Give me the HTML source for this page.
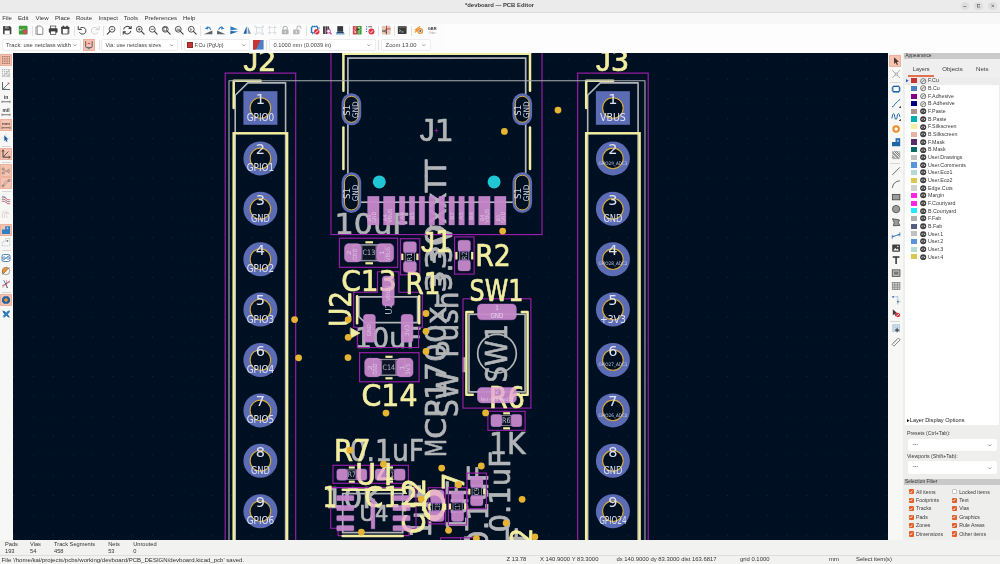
<!DOCTYPE html>
<html lang="en"><head><meta charset="utf-8"><title>*devboard — PCB Editor</title>
<style>

html,body{margin:0;padding:0;background:#fff}
#app{transform:translateZ(0);will-change:transform;position:relative;width:1000px;height:564px;overflow:hidden;background:#f6f6f5;
 font-family:"Liberation Sans","DejaVu Sans",sans-serif;font-size:5.8px;color:#3b3b3b;line-height:1}
#app div,#app span{position:absolute;white-space:nowrap;box-sizing:border-box}
.title{left:0;top:0;width:1000px;height:12.5px;background:#ebebeb;border-bottom:0.6px solid #dadada}
.title .t{left:399.5px;width:200px;top:2.8px;text-align:center;font-weight:bold;font-size:5.9px;color:#3a3a3a}
.wb{top:2px;width:8.4px;height:8.4px;border-radius:50%;background:#dedede}
.menubar{left:0;top:12.5px;width:1000px;height:11.1px;background:#f7f7f7}
.menubar span{top:2.7px;font-size:6.05px;color:#333}
.tbwhite{left:446px;top:23.6px;width:554px;height:29.2px;background:#fdfdfd}
.tb{left:0;top:23.6px;width:446px;height:29.2px;background:#fcfcfc}
.sep{width:0.7px;background:#e2e2e2}
.dd{top:38.9px;height:11.8px;background:#fff;border:0.6px solid #ececec;border-radius:2.2px}
.dd .x{top:2.9px;font-size:5.8px;color:#444}
.hl{background:#f4c3b1;border:0.5px solid #edb09a;border-radius:0.8px}
.lt{left:0;top:52.7px;width:12.6px;height:487.1px;background:#f7f7f6}
.rt{left:888.3px;top:52.7px;width:14.9px;height:487.1px;background:#f7f7f6}
.ap{left:903.2px;top:52.7px;width:96.8px;height:487.1px;background:#eeeeed}
.ap .hd{left:0.6px;top:0;width:96.2px;height:6.2px;background:#c9c9c9;font-size:4.9px;color:#333}
.ap .tabs{left:0.8px;top:6.1px;width:96px;height:17.8px;background:#efefef}
.ap .tabs span{top:7.6px;font-size:6.1px;color:#3c3c3c}
.ap .list{left:1.8px;top:24px;width:93.8px;height:348.2px;background:#fff}
.row{left:0;width:93.8px;height:7.66px}
.row .sw{left:5.9px;top:1.3px;width:6.3px;height:5.1px}
.row .nm{left:23px;top:1.5px;font-size:5.3px;color:#3a3a3a}
.cb{width:5.2px;height:5.2px;border-radius:1px;background:#e25f2c}
.cb0{width:5.2px;height:5.2px;border-radius:1px;background:#fff;border:0.6px solid #c4c4c4}
.lbl{font-size:5.2px;color:#3a3a3a}
.bot{left:0;top:539.8px;width:1000px;height:24.2px;background:#f2f2f1}
.bot span{font-size:5.7px;color:#333}
.bot span.st{font-size:5.9px}

</style></head>
<body>
<div id="app">
<div class="title"><div class="t">*devboard — PCB Editor</div>
<div class="wb" style="left:960.8px">
<svg style="position:absolute;left:2.4px;top:2.4px" width="3.6" height="3.6" viewBox="0 0 10 10"><line x1="1" y1="7" x2="9" y2="7" stroke="#444" stroke-width="1.6"/></svg>
</div>
<div class="wb" style="left:974.3px">
<svg style="position:absolute;left:2.4px;top:2.4px" width="3.6" height="3.6" viewBox="0 0 10 10"><rect x="1.5" y="1.5" width="7" height="7" fill="none" stroke="#444" stroke-width="1.5"/></svg>
</div>
<div class="wb" style="left:988.3px">
<svg style="position:absolute;left:2.4px;top:2.4px" width="3.6" height="3.6" viewBox="0 0 10 10"><path d="M1.2 1.2L8.8 8.8M8.8 1.2L1.2 8.8" stroke="#444" stroke-width="1.6"/></svg>
</div>
</div>
<div class="menubar">
<span style="left:2.2px">File</span>
<span style="left:18.0px">Edit</span>
<span style="left:35.5px">View</span>
<span style="left:55.0px">Place</span>
<span style="left:75.9px">Route</span>
<span style="left:98.5px">Inspect</span>
<span style="left:123.8px">Tools</span>
<span style="left:144.5px">Preferences</span>
<span style="left:183.0px">Help</span>
</div>
<div class="tbwhite"></div><div class="tb"></div>
<div class="sep" style="left:31.5px;top:25.6px;height:10.4px"></div>
<div class="sep" style="left:73.5px;top:25.6px;height:10.4px"></div>
<div class="sep" style="left:103.2px;top:25.6px;height:10.4px"></div>
<div class="sep" style="left:119.5px;top:25.6px;height:10.4px"></div>
<div class="sep" style="left:200.0px;top:25.6px;height:10.4px"></div>
<div class="sep" style="left:306.2px;top:25.6px;height:10.4px"></div>
<div class="sep" style="left:348.6px;top:25.6px;height:10.4px"></div>
<div class="sep" style="left:378.2px;top:25.6px;height:10.4px"></div>
<div class="sep" style="left:394.2px;top:25.6px;height:10.4px"></div>
<div class="sep" style="left:411.2px;top:25.6px;height:10.4px"></div>
<div class="sep" style="left:99.4px;top:39.6px;height:10.6px"></div>
<div class="sep" style="left:181.0px;top:39.6px;height:10.6px"></div>
<div class="sep" style="left:266.2px;top:39.6px;height:10.6px"></div>
<div class="sep" style="left:378.4px;top:39.6px;height:10.6px"></div>
<svg style="position:absolute;left:1.8px;top:25.4px" width="10.4" height="10.4" viewBox="0 0 20 20"><path d="M2 3.2Q2 2 3.2 2H15l3 3v11.8q0 1.2-1.2 1.2H3.2Q2 18 2 16.8Z" fill="#3f3f3f"/><rect x="5" y="10.6" width="10" height="7.4" fill="#fff"/><rect x="5.6" y="2" width="7.8" height="5" fill="#9a9a9a"/><rect x="10.6" y="2.8" width="1.9" height="3.4" fill="#3f3f3f"/></svg>
<svg style="position:absolute;left:18.2px;top:25.4px" width="10.4" height="10.4" viewBox="0 0 20 20"><rect x="1.6" y="1.6" width="16.8" height="16.8" rx="2" fill="#3f9b35"/><path d="M3 9.5h5l2-2h3" fill="none" stroke="#d7f0c8" stroke-width="1.1"/><circle cx="4" cy="9.5" r="1.2" fill="#fff"/><circle cx="13.6" cy="13.2" r="3.5" fill="#dc4163"/><circle cx="13.6" cy="13.2" r="1.4" fill="#f5c6cf"/><rect x="12.9" y="8.4" width="1.4" height="9.6" fill="#dc4163"/><rect x="8.8" y="12.5" width="9.6" height="1.4" fill="#dc4163"/><path d="M10.2 9.8l6.8 6.8M17 9.8l-6.8 6.8" stroke="#dc4163" stroke-width="1.3"/></svg>
<svg style="position:absolute;left:34.2px;top:25.4px" width="10.4" height="10.4" viewBox="0 0 20 20"><path d="M3 4h9v14H3Z" fill="#e4e4e4" stroke="#9a9a9a" stroke-width="1"/><path d="M6 2h7l4 4v12H6Z" fill="#fff" stroke="#5a5a5a" stroke-width="1.3"/></svg>
<svg style="position:absolute;left:47.5px;top:25.4px" width="10.4" height="10.4" viewBox="0 0 20 20"><rect x="5" y="2" width="10" height="6" fill="#fff" stroke="#3f3f3f" stroke-width="1.4"/><rect x="1.6" y="6.4" width="16.8" height="8.6" rx="2" fill="#3f3f3f"/><rect x="5" y="11.6" width="10" height="6.4" fill="#fff" stroke="#3f3f3f" stroke-width="1.4"/></svg>
<svg style="position:absolute;left:60.1px;top:25.4px" width="10.4" height="10.4" viewBox="0 0 20 20"><rect x="2" y="3.4" width="16" height="5" rx="1" fill="#3f3f3f"/><rect x="4.6" y="7" width="10.8" height="10.4" fill="#fff" stroke="#3f3f3f" stroke-width="1.5"/><path d="M3 8v9M17 8v9" stroke="#3f3f3f" stroke-width="1.6"/><rect x="5" y="1.4" width="3" height="3" fill="#3f3f3f"/><rect x="12" y="1.4" width="3" height="3" fill="#3f3f3f"/></svg>
<svg style="position:absolute;left:76.5px;top:25.4px" width="10.4" height="10.4" viewBox="0 0 20 20"><path d="M5.2 7.2A6.6 6.6 0 1 1 5 14.6" fill="none" stroke="#3f3f3f" stroke-width="1.9" stroke-linecap="round"/><path d="M2.4 2.8v6h6" fill="none" stroke="#3f3f3f" stroke-width="1.9" stroke-linejoin="round" stroke-linecap="round"/></svg>
<svg style="position:absolute;left:90.3px;top:25.4px" width="10.4" height="10.4" viewBox="0 0 20 20"><path d="M14.8 7.2A6.6 6.6 0 1 0 15 14.6" fill="none" stroke="#cdcdcd" stroke-width="1.9" stroke-linecap="round"/><path d="M17.6 2.8v6h-6" fill="none" stroke="#cdcdcd" stroke-width="1.9" stroke-linejoin="round" stroke-linecap="round"/></svg>
<svg style="position:absolute;left:106.4px;top:25.4px" width="10.4" height="10.4" viewBox="0 0 20 20"><circle cx="11.6" cy="8.2" r="5.6" fill="#fff" stroke="#3f3f3f" stroke-width="1.7"/><line x1="7.6" y1="12.4" x2="2.4" y2="17.6" stroke="#3f3f3f" stroke-width="2.1" stroke-linecap="round"/><path d="M8.6 10q3-4.4 6 0M11.6 5.4v1.6" fill="none" stroke="#3f3f3f" stroke-width="1.2"/></svg>
<svg style="position:absolute;left:122.4px;top:25.4px" width="10.4" height="10.4" viewBox="0 0 20 20"><path d="M3 8.6A7.2 7.2 0 0 1 16.2 6" fill="none" stroke="#3f3f3f" stroke-width="2"/><path d="M17 11.4A7.2 7.2 0 0 1 3.8 14" fill="none" stroke="#3f3f3f" stroke-width="2"/><path d="M17.6 1.8v5h-5" fill="none" stroke="#3f3f3f" stroke-width="2"/><path d="M2.4 18.2v-5h5" fill="none" stroke="#3f3f3f" stroke-width="2"/></svg>
<svg style="position:absolute;left:135.4px;top:25.4px" width="10.4" height="10.4" viewBox="0 0 20 20"><circle cx="8.2" cy="8.2" r="5.6" fill="#fff" stroke="#3f3f3f" stroke-width="1.7"/><line x1="12.4" y1="12.4" x2="17.6" y2="17.6" stroke="#3f3f3f" stroke-width="2.1" stroke-linecap="round"/><path d="M5.2 8.2h6M8.2 5.2v6" stroke="#3f3f3f" stroke-width="1.5"/></svg>
<svg style="position:absolute;left:148.4px;top:25.4px" width="10.4" height="10.4" viewBox="0 0 20 20"><circle cx="8.2" cy="8.2" r="5.6" fill="#fff" stroke="#3f3f3f" stroke-width="1.7"/><line x1="12.4" y1="12.4" x2="17.6" y2="17.6" stroke="#3f3f3f" stroke-width="2.1" stroke-linecap="round"/><path d="M5.2 8.2h6" stroke="#3f3f3f" stroke-width="1.5"/></svg>
<svg style="position:absolute;left:161.4px;top:25.4px" width="10.4" height="10.4" viewBox="0 0 20 20"><circle cx="8.2" cy="8.2" r="5.6" fill="#fff" stroke="#3f3f3f" stroke-width="1.7"/><line x1="12.4" y1="12.4" x2="17.6" y2="17.6" stroke="#3f3f3f" stroke-width="2.1" stroke-linecap="round"/><rect x="5.6" y="5" width="5.2" height="6.4" fill="none" stroke="#3f3f3f" stroke-width="1.3"/></svg>
<svg style="position:absolute;left:174.4px;top:25.4px" width="10.4" height="10.4" viewBox="0 0 20 20"><circle cx="8.2" cy="8.2" r="5.6" fill="#fff" stroke="#3f3f3f" stroke-width="1.7"/><line x1="12.4" y1="12.4" x2="17.6" y2="17.6" stroke="#3f3f3f" stroke-width="2.1" stroke-linecap="round"/><path d="M5 10.6l2.2-4 2 2.4 1.4-1.4 1 3Z" fill="none" stroke="#3f3f3f" stroke-width="1.1"/></svg>
<svg style="position:absolute;left:187.0px;top:25.4px" width="10.4" height="10.4" viewBox="0 0 20 20"><circle cx="8.2" cy="8.2" r="5.6" fill="#fff" stroke="#3f3f3f" stroke-width="1.7"/><line x1="12.4" y1="12.4" x2="17.6" y2="17.6" stroke="#3f3f3f" stroke-width="2.1" stroke-linecap="round"/><path d="M6.6 5v6.4l1.8-1.6 1.8 1.2Z" fill="#3f3f3f"/></svg>
<svg style="position:absolute;left:202.8px;top:25.4px" width="10.4" height="10.4" viewBox="0 0 20 20"><path d="M1.6 17.8h16.4v-7.4Z" fill="#5d6268"/><path d="M14.6 9A5.2 5.2 0 0 0 7 4.6" fill="none" stroke="#2f7fc4" stroke-width="2.2"/><path d="M3.4 7.4l6.2-4.6.4 6Z" fill="#2f7fc4"/></svg>
<svg style="position:absolute;left:216.4px;top:25.4px" width="10.4" height="10.4" viewBox="0 0 20 20"><path d="M18.4 17.8H2v-7.4Z" fill="#5d6268"/><path d="M5.4 9A5.2 5.2 0 0 1 13 4.6" fill="none" stroke="#2f7fc4" stroke-width="2.2"/><path d="M16.6 7.4l-6.2-4.6-.4 6Z" fill="#2f7fc4"/></svg>
<svg style="position:absolute;left:229.2px;top:25.4px" width="10.4" height="10.4" viewBox="0 0 20 20"><path d="M2.6 2.6L17.6 8 2.6 10.4Z" fill="#2f7fc4"/><path d="M2.6 11.4L17.6 12.4 2.6 17.6Z" fill="#1f66a8"/></svg>
<svg style="position:absolute;left:241.8px;top:25.4px" width="10.4" height="10.4" viewBox="0 0 20 20"><path d="M9 2.4V17H2.6Z" fill="#1f64a6"/><path d="M11 2.4V17h6.4Z" fill="#7e97b0"/></svg>
<svg style="position:absolute;left:254.4px;top:25.4px" width="10.4" height="10.4" viewBox="0 0 20 20"><rect x="4.4" y="4.4" width="11.2" height="11.2" fill="#f6f8fa" stroke="#c3cedb" stroke-width="1.1"/><path d="M2 5V2h3M15 2h3v3M18 15v3h-3M5 18H2v-3" fill="none" stroke="#b4c3d6" stroke-width="1.2"/></svg>
<svg style="position:absolute;left:267.4px;top:25.4px" width="10.4" height="10.4" viewBox="0 0 20 20"><rect x="5" y="5" width="10" height="10" fill="none" stroke="#cfd6de" stroke-width="1.1"/><path d="M5 1.6v4M1.6 5h4M15 1.6v4M18.4 5h-4M5 18.4v-4M1.6 15h4M15 18.4v-4M18.4 15h-4" stroke="#c3ccd6" stroke-width="1.1"/></svg>
<svg style="position:absolute;left:280.4px;top:25.4px" width="10.4" height="10.4" viewBox="0 0 20 20"><path d="M6 9V6.4a4 4 0 0 1 8 0V9" fill="none" stroke="#b3b3b3" stroke-width="2"/><rect x="3.6" y="8.6" width="12.8" height="9.4" rx="1.2" fill="#b3b3b3"/><rect x="9" y="11.6" width="2" height="3.6" fill="#eee"/></svg>
<svg style="position:absolute;left:292.4px;top:25.4px" width="10.4" height="10.4" viewBox="0 0 20 20"><path d="M9.6 9V5.6a3.8 3.8 0 0 1 7.6 0V7" fill="none" stroke="#b9b9b9" stroke-width="2"/><rect x="2.2" y="8.6" width="12.4" height="9.4" rx="1.2" fill="#b9b9b9"/><rect x="7.4" y="11.6" width="2" height="3.6" fill="#eee"/></svg>
<svg style="position:absolute;left:309.8px;top:25.4px" width="10.4" height="10.4" viewBox="0 0 20 20"><rect x="3.2" y="3.4" width="11.6" height="11.6" rx="1.4" fill="none" stroke="#1f6fb6" stroke-width="2.2"/><path d="M5 1v3M9 1v3M13 1v3M1 6h3M1 10h3M1 14h3M5 15v3M16 6h3" stroke="#1f6fb6" stroke-width="1.7"/><circle cx="13" cy="13" r="5.2" fill="#d9343f"/><line x1="9.8" y1="15.6" x2="16.2" y2="10.4" stroke="#fff" stroke-width="1.7"/></svg>
<svg style="position:absolute;left:322.4px;top:25.4px" width="10.4" height="10.4" viewBox="0 0 20 20"><rect x="2" y="2.4" width="3.6" height="15" fill="#3f3f3f"/><rect x="6.6" y="2.4" width="3.6" height="15" fill="#3f3f3f"/><rect x="11" y="3" width="3.4" height="8" fill="#3f3f3f" transform="rotate(-12 12 8)"/><circle cx="12.6" cy="11.8" r="3.6" fill="#fff" stroke="#c7348f" stroke-width="1.7"/><line x1="15" y1="14.4" x2="18.2" y2="17.8" stroke="#c7348f" stroke-width="2.2"/></svg>
<svg style="position:absolute;left:335.4px;top:25.4px" width="10.4" height="10.4" viewBox="0 0 20 20"><path d="M4.4 2.2h11.2v10H4.4Z" fill="#33373c"/><path d="M1.8 16.6l3-4.6h10.4l3 4.6Z" fill="#27476a"/><rect x="1.8" y="16.4" width="16.4" height="1.8" fill="#5fa3d8"/></svg>
<svg style="position:absolute;left:351.8px;top:25.4px" width="10.4" height="10.4" viewBox="0 0 20 20"><rect x="1.6" y="1.8" width="8.4" height="16.4" rx="1" fill="#d94050"/><rect x="9.6" y="1.8" width="8.8" height="16.4" rx="1" fill="#3f9b35"/><path d="M6 3v6l-2.4 2.4M13.6 17v-6l2.4-2.4" fill="none" stroke="#f4f4f4" stroke-width="1.2"/><circle cx="6" cy="13.6" r="1.6" fill="#fff"/><circle cx="13.6" cy="5.4" r="1.6" fill="#fff"/><path d="M8 8.4h4.4M10.6 6.4l2 2-2 2" fill="none" stroke="#222" stroke-width="1.3"/></svg>
<svg style="position:absolute;left:364.8px;top:25.4px" width="10.4" height="10.4" viewBox="0 0 20 20"><path d="M1.8 3.4h2.4M1.8 8h2.4M1.8 12.6h2.4" stroke="#2f7fc4" stroke-width="2.2"/><path d="M6.4 3.4h7.2" stroke="#3f3f3f" stroke-width="1.5"/><circle cx="12.4" cy="12.4" r="5.8" fill="#d9343f"/><polyline points="9.4,12.6 11.6,14.8 15.4,10.2" fill="none" stroke="#fff" stroke-width="1.8"/></svg>
<svg style="position:absolute;left:380.8px;top:25.4px" width="10.4" height="10.4" viewBox="0 0 20 20"><rect x="1.6" y="1.6" width="16.8" height="16.8" rx="1.2" fill="#ddc9b4"/><path d="M10.6 1.6v16.8M10.6 7.4h7.8" stroke="#c5303c" stroke-width="1.7" fill="none"/><path d="M2 11.6h5l3.4-3.4M7 11.6l3.4 3.6" stroke="#2b2b2b" stroke-width="1.7" fill="none"/></svg>
<svg style="position:absolute;left:397.4px;top:25.4px" width="10.4" height="10.4" viewBox="0 0 20 20"><rect x="1.6" y="2.6" width="16.8" height="14.8" rx="1.4" fill="#3b3b3b"/><rect x="1.6" y="2.6" width="16.8" height="3.2" rx="1.2" fill="#5c5c5c"/><path d="M4.4 9l2.6 2-2.6 2M8.4 13.4h4" fill="none" stroke="#f2f2f2" stroke-width="1.3"/></svg>
<svg style="position:absolute;left:414.2px;top:25.4px" width="10.4" height="10.4" viewBox="0 0 20 20"><path d="M2 9.4L11 3.4M2.4 13.6L9 8.6M4.2 9.4h7" stroke="#f0902c" stroke-width="2.2" stroke-linecap="round"/><circle cx="12" cy="11.6" r="5.6" fill="#f0902c"/><circle cx="12" cy="11.6" r="3.1" fill="#fff"/><circle cx="12" cy="11.6" r="1.9" fill="#2d5f94"/></svg>
<svg style="position:absolute;left:427.2px;top:25.4px" width="10.4" height="10.4" viewBox="0 0 20 20"><text x="10" y="9.4" font-family="Liberation Sans,sans-serif" font-weight="bold" font-size="8.4" text-anchor="middle" fill="#3a3a3a" textLength="17" lengthAdjust="spacingAndGlyphs">GBR</text><text x="10" y="16.8" font-family="Liberation Sans,sans-serif" font-size="5.4" text-anchor="middle" fill="#9a9a9a" textLength="13" lengthAdjust="spacingAndGlyphs">Order</text></svg>
<div class="dd" style="left:1.5px;width:79.1px"><span class="x" style="left:3.5px;font-size:5.8px">Track: use netclass width</span></div>
<svg style="position:absolute;left:73.2px;top:44.0px" width="3.6" height="2.6" viewBox="0 0 10 6.5"><polyline points="0.8,0.8 5,5.2 9.2,0.8" fill="none" stroke="#555" stroke-width="1.5"/></svg>
<div class="dd" style="left:101.4px;width:76.8px"><span class="x" style="left:3.2px;font-size:5.5px">Via: use netclass sizes</span></div>
<svg style="position:absolute;left:169.79999999999998px;top:44.0px" width="3.6" height="2.6" viewBox="0 0 10 6.5"><polyline points="0.8,0.8 5,5.2 9.2,0.8" fill="none" stroke="#555" stroke-width="1.5"/></svg>
<div class="dd" style="left:183.6px;width:66.6px"><span class="x" style="left:9.8px;font-size:5.3px">F.Cu (PgUp)</span></div>
<svg style="position:absolute;left:242.0px;top:44.0px" width="3.6" height="2.6" viewBox="0 0 10 6.5"><polyline points="0.8,0.8 5,5.2 9.2,0.8" fill="none" stroke="#555" stroke-width="1.5"/></svg>
<div class="dd" style="left:268.6px;width:107.2px"><span class="x" style="left:3.8px;font-size:5.75px">0.1000 mm (0.0039 in)</span></div>
<svg style="position:absolute;left:367.2px;top:44.0px" width="3.6" height="2.6" viewBox="0 0 10 6.5"><polyline points="0.8,0.8 5,5.2 9.2,0.8" fill="none" stroke="#555" stroke-width="1.5"/></svg>
<div class="dd" style="left:380.6px;width:50.8px"><span class="x" style="left:4.0px;font-size:5.8px">Zoom 13.00</span></div>
<svg style="position:absolute;left:422.4px;top:44.0px" width="3.6" height="2.6" viewBox="0 0 10 6.5"><polyline points="0.8,0.8 5,5.2 9.2,0.8" fill="none" stroke="#555" stroke-width="1.5"/></svg>
<div style="left:187.2px;top:42.2px;width:5.6px;height:5.4px;background:#c83434;border:0.4px solid #8d2a2a"></div>
<div class="hl" style="left:83.2px;top:38.9px;width:12.2px;height:12.2px"></div>
<svg style="position:absolute;left:84.4px;top:40.0px" width="9.8" height="9.8" viewBox="0 0 20 20"><path d="M3.4 2.4v11.2q0 2 2 2h9.2q2 0 2-2V2.4" fill="none" stroke="#3f4750" stroke-width="1.7"/><path d="M7.4 7h5.2" stroke="#c5303c" stroke-width="1.7"/><path d="M7 15.8h6L10 19.6Z" fill="#2f7fc4"/></svg>
<svg style="position:absolute;left:253px;top:40px" width="10.6" height="9.6" viewBox="0 0 10.6 9.6"><rect width="10.6" height="9.6" fill="#4d7fc4"/><polygon points="0,0 7.6,0 3,9.6 0,9.6" fill="#c83434"/></svg>
<div class="lt">
<div class="hl" style="left:0.3px;top:1.4px;width:11.9px;height:12.2px"></div>
<div class="hl" style="left:0.3px;top:66.2px;width:11.9px;height:12.2px"></div>
<div class="hl" style="left:0.3px;top:95.2px;width:11.9px;height:12.2px"></div>
<div class="hl" style="left:0.3px;top:111.7px;width:11.9px;height:12.2px"></div>
<div class="hl" style="left:0.3px;top:124.6px;width:11.9px;height:12.2px"></div>
<div class="hl" style="left:0.3px;top:170.9px;width:11.9px;height:12.2px"></div>
<div class="hl" style="left:0.3px;top:241.6px;width:11.9px;height:12.2px"></div>
<div style="left:1.5px;top:93.1px;width:9.5px;height:0.7px;background:#d6d6d6"></div>
<div style="left:1.5px;top:109.5px;width:9.5px;height:0.7px;background:#d6d6d6"></div>
<div style="left:1.5px;top:138.7px;width:9.5px;height:0.7px;background:#d6d6d6"></div>
<div style="left:1.5px;top:197.1px;width:9.5px;height:0.7px;background:#d6d6d6"></div>
<div style="left:1.5px;top:239.3px;width:9.5px;height:0.7px;background:#d6d6d6"></div>
</div>
<svg style="position:absolute;left:1.3px;top:55.2px" width="10.0" height="10.0" viewBox="0 0 20 20"><rect x="2.2" y="2.2" width="2.4" height="2.4" fill="#8e5a4c"/><rect x="2.2" y="6.6" width="2.4" height="2.4" fill="#8e5a4c"/><rect x="2.2" y="11" width="2.4" height="2.4" fill="#8e5a4c"/><rect x="2.2" y="15.4" width="2.4" height="2.4" fill="#8e5a4c"/><rect x="6.6" y="2.2" width="2.4" height="2.4" fill="#8e5a4c"/><rect x="6.6" y="6.6" width="2.4" height="2.4" fill="#8e5a4c"/><rect x="6.6" y="11" width="2.4" height="2.4" fill="#8e5a4c"/><rect x="6.6" y="15.4" width="2.4" height="2.4" fill="#8e5a4c"/><rect x="11" y="2.2" width="2.4" height="2.4" fill="#8e5a4c"/><rect x="11" y="6.6" width="2.4" height="2.4" fill="#8e5a4c"/><rect x="11" y="11" width="2.4" height="2.4" fill="#8e5a4c"/><rect x="11" y="15.4" width="2.4" height="2.4" fill="#8e5a4c"/><rect x="15.4" y="2.2" width="2.4" height="2.4" fill="#8e5a4c"/><rect x="15.4" y="6.6" width="2.4" height="2.4" fill="#8e5a4c"/><rect x="15.4" y="11" width="2.4" height="2.4" fill="#8e5a4c"/><rect x="15.4" y="15.4" width="2.4" height="2.4" fill="#8e5a4c"/></svg>
<svg style="position:absolute;left:1.3px;top:68.2px" width="10.0" height="10.0" viewBox="0 0 20 20"><rect x="2.4" y="2.4" width="1.8" height="1.8" fill="#777"/><rect x="2.4" y="6.6" width="1.8" height="1.8" fill="#777"/><rect x="2.4" y="10.8" width="1.8" height="1.8" fill="#777"/><rect x="2.4" y="15" width="1.8" height="1.8" fill="#777"/><rect x="6.6" y="2.4" width="1.8" height="1.8" fill="#777"/><rect x="6.6" y="6.6" width="1.8" height="1.8" fill="#777"/><rect x="6.6" y="10.8" width="1.8" height="1.8" fill="#777"/><rect x="6.6" y="15" width="1.8" height="1.8" fill="#777"/><rect x="10.8" y="2.4" width="1.8" height="1.8" fill="#777"/><rect x="10.8" y="6.6" width="1.8" height="1.8" fill="#777"/><rect x="10.8" y="10.8" width="1.8" height="1.8" fill="#777"/><rect x="15" y="2.4" width="1.8" height="1.8" fill="#777"/><rect x="15" y="6.6" width="1.8" height="1.8" fill="#777"/><path d="M3 18L18 3" stroke="#888" stroke-width="1.2"/><path d="M18 18H8L18 8Z" fill="#c9c9c9"/></svg>
<svg style="position:absolute;left:1.3px;top:81.2px" width="10.0" height="10.0" viewBox="0 0 20 20"><path d="M3 2v15h15" fill="none" stroke="#3f3f3f" stroke-width="1.6"/><path d="M3 17L16 4" stroke="#3f3f3f" stroke-width="1.3"/><path d="M12.4 3.2l4.4.2-.4 4.2Z" fill="#d43c4a"/><path d="M8.4 17a5.4 5.4 0 0 0-1.6-3.8" fill="none" stroke="#2f7fc4" stroke-width="1.3"/></svg>
<svg style="position:absolute;left:1.3px;top:94.0px" width="10.0" height="10.0" viewBox="0 0 20 20"><text x="10" y="10.4" font-family="Liberation Sans,sans-serif" font-weight="bold" font-size="10" text-anchor="middle" fill="#3a3a3a">in</text><path d="M2 15.6h16M2 13.2v4.8M18 13.2v4.8M6 14v1.6M10 14v1.6M14 14v1.6" stroke="#3a3a3a" stroke-width="1.1"/></svg>
<svg style="position:absolute;left:1.3px;top:107.0px" width="10.0" height="10.0" viewBox="0 0 20 20"><text x="10" y="10.4" font-family="Liberation Sans,sans-serif" font-weight="bold" font-size="9.6" text-anchor="middle" fill="#3a3a3a">mil</text><path d="M2 15.6h16M2 13.2v4.8M18 13.2v4.8M6 14v1.6M10 14v1.6M14 14v1.6" stroke="#3a3a3a" stroke-width="1.1"/></svg>
<svg style="position:absolute;left:1.3px;top:120.0px" width="10.0" height="10.0" viewBox="0 0 20 20"><text x="10" y="10.2" font-family="Liberation Sans,sans-serif" font-weight="bold" font-size="8.6" text-anchor="middle" fill="#4a3a36" textLength="16" lengthAdjust="spacingAndGlyphs">mm</text><path d="M2 15.6h16M2 13.2v4.8M18 13.2v4.8M6 14v1.6M10 14v1.6M14 14v1.6" stroke="#4a3a36" stroke-width="1.1"/></svg>
<svg style="position:absolute;left:1.3px;top:133.3px" width="10.0" height="10.0" viewBox="0 0 20 20"><path d="M10 1.6v16.8M1.6 10h16.8" stroke="#b7c4d4" stroke-width="0.9"/><path d="M6.6 4.4l8 8.6-3.6.2 2 4-1.8.8-2-4-2.6 2.4Z" fill="#1f5f9e"/></svg>
<svg style="position:absolute;left:1.3px;top:149.0px" width="10.0" height="10.0" viewBox="0 0 20 20"><path d="M4 2v14.4h14" fill="none" stroke="#3a3230" stroke-width="1.8"/><path d="M4 16.4L14.6 5" stroke="#3a3230" stroke-width="1.5"/><path d="M1.6 5.4L4 1.4l2.4 4M15 14l3.6 2.4L15 18.8" fill="none" stroke="#3a3230" stroke-width="1.2"/></svg>
<svg style="position:absolute;left:1.3px;top:165.5px" width="10.0" height="10.0" viewBox="0 0 20 20"><path d="M2.4 5.6l15 9M2.4 14.6l15-9" stroke="#8b7a74" stroke-width="1"/><circle cx="4.4" cy="6" r="2.4" fill="none" stroke="#7b6a64" stroke-width="1.1"/><circle cx="4.4" cy="14.2" r="2.4" fill="none" stroke="#7b6a64" stroke-width="1.1"/><circle cx="15.4" cy="10" r="2.2" fill="none" stroke="#7b6a64" stroke-width="1.1"/></svg>
<svg style="position:absolute;left:1.3px;top:178.4px" width="10.0" height="10.0" viewBox="0 0 20 20"><path d="M3 16Q8 4 17 4" fill="none" stroke="#8b7a74" stroke-width="1.1"/><path d="M4 17.6L17.6 4.4" stroke="#9b8a84" stroke-width="1.2"/><circle cx="4" cy="15.8" r="2.2" fill="none" stroke="#7b6a64" stroke-width="1.1"/><circle cx="16" cy="5" r="2.2" fill="none" stroke="#7b6a64" stroke-width="1.1"/></svg>
<svg style="position:absolute;left:1.3px;top:194.8px" width="10.0" height="10.0" viewBox="0 0 20 20"><path d="M1.6 4.6q5-1.6 8.4 2.4t8.4 2.4" fill="none" stroke="#d43c4a" stroke-width="1.5"/><path d="M1.6 8.6q5-1.6 8.4 2.4t8.4 2.4" fill="none" stroke="#444" stroke-width="1.3"/><path d="M1.6 12.6q5-1.6 8.4 2.4t8.4 2.4" fill="none" stroke="#d43c4a" stroke-width="1.5"/><path d="M2 2.4q6 0 9 4" fill="none" stroke="#2f7fc4" stroke-width="1.2"/></svg>
<svg style="position:absolute;left:1.3px;top:208.5px" width="10.0" height="10.0" viewBox="0 0 20 20"><path d="M2.6 18V9.6q0-3 3-3h9.6M7 18v-7q0-1.6 1.6-1.6H17M11.6 18v-5" fill="none" stroke="#d6c3bc" stroke-width="1.3"/><path d="M3 5l4-3M9 5l4-3" stroke="#e2d2cc" stroke-width="1.1"/></svg>
<svg style="position:absolute;left:1.3px;top:224.7px" width="10.0" height="10.0" viewBox="0 0 20 20"><path d="M2 18V9h6.4V2.6H18V18Z" fill="#2f7fc4"/><path d="M11 6.4h4M13 4.4v4" stroke="#d6e6f6" stroke-width="1.2"/></svg>
<svg style="position:absolute;left:1.3px;top:237.2px" width="10.0" height="10.0" viewBox="0 0 20 20"><path d="M2.4 17.6V9.4h6.4V3H17.6v14.6Z" fill="none" stroke="#7f93ab" stroke-width="1.2" stroke-dasharray="1.6 1.6"/><rect x="11.4" y="6.4" width="3" height="3" fill="#55606e"/></svg>
<svg style="position:absolute;left:1.3px;top:252.7px" width="10.0" height="10.0" viewBox="0 0 20 20"><rect x="2" y="3" width="16" height="14" rx="3.4" fill="#fff" stroke="#1f5f9e" stroke-width="1.5"/><circle cx="6" cy="10" r="2.6" fill="none" stroke="#1f5f9e" stroke-width="1.2"/><circle cx="14" cy="10" r="2.6" fill="none" stroke="#1f5f9e" stroke-width="1.2"/><path d="M3 15.6L17 4.4" stroke="#1f5f9e" stroke-width="1"/></svg>
<svg style="position:absolute;left:1.3px;top:265.6px" width="10.0" height="10.0" viewBox="0 0 20 20"><path d="M3.4 16.6A9 9 0 0 1 14.8 3.6L10.6 10Z" fill="#f0902c"/><circle cx="10" cy="10" r="7.6" fill="none" stroke="#555" stroke-width="1"/><path d="M2.6 17.4L17.4 2.6" stroke="#555" stroke-width="1"/></svg>
<svg style="position:absolute;left:1.3px;top:279.0px" width="10.0" height="10.0" viewBox="0 0 20 20"><path d="M2 14L18 5" stroke="#d43c4a" stroke-width="1.7"/><path d="M5.4 2.4l8 15.6" stroke="#1f5f9e" stroke-width="1.6"/><path d="M3 17.6L17 3" stroke="#555" stroke-width="0.9"/><path d="M11 2v16" stroke="#d43c4a" stroke-width="1"/></svg>
<svg style="position:absolute;left:1.3px;top:295.4px" width="10.0" height="10.0" viewBox="0 0 20 20"><path d="M6 2.4h8L18 7v6.4L14 17.6H6L2 13.4V7Z" fill="#1f64a6"/><path d="M10 5.6l4.6 4.4L10 14.4 5.4 10Z" fill="#f0902c"/></svg>
<svg style="position:absolute;left:1.3px;top:308.5px" width="10.0" height="10.0" viewBox="0 0 20 20"><path d="M3 3l4.4 1.4 8.8 9.4 1.2 3.6-3.6-1.2L4.4 7.4Z" fill="#1f64a6"/><path d="M16.6 2.6L13 4.4l-9.8 10 1.2 2.8 2.8-.4L16.6 7.4l1.2-3Z" fill="#2f7fc4"/><circle cx="4.6" cy="15.6" r="1" fill="#fff"/></svg>
<div class="rt">
<div class="hl" style="left:1.1px;top:2.2px;width:11.9px;height:12.6px"></div>
<div style="left:2px;top:28.9px;width:10px;height:0.7px;background:#d6d6d6"></div>
<div style="left:2px;top:110.5px;width:10px;height:0.7px;background:#d6d6d6"></div>
<div style="left:2px;top:267.9px;width:10px;height:0.7px;background:#d6d6d6"></div>
</div>
<svg style="position:absolute;left:890.6px;top:56.1px" width="10.2" height="10.2" viewBox="0 0 20 20"><path d="M6 2.4l9.4 9-4.2.4 2.4 4.8-2 1-2.4-4.8L6 15.6Z" fill="#4a3430"/></svg>
<svg style="position:absolute;left:890.6px;top:68.7px" width="10.2" height="10.2" viewBox="0 0 20 20"><path d="M2.4 2.4l15.2 15.2M17.6 2.4L2.4 17.6" stroke="#6a6a6a" stroke-width="1"/><rect x="8" y="8" width="4" height="4" fill="#fff" stroke="#6a6a6a" stroke-width="0.9"/></svg>
<svg style="position:absolute;left:890.6px;top:83.5px" width="10.2" height="10.2" viewBox="0 0 20 20"><rect x="3.6" y="5" width="12.8" height="10" rx="1.4" fill="#fff" stroke="#1f64a6" stroke-width="2.2"/><path d="M6 2.4v2.6M10 2.4v2.6M14 2.4v2.6M6 15v2.6M10 15v2.6M14 15v2.6M1 8h2.6M1 12h2.6M16.4 8H19M16.4 12H19" stroke="#1f64a6" stroke-width="1.8"/></svg>
<svg style="position:absolute;left:890.6px;top:97.7px" width="10.2" height="10.2" viewBox="0 0 20 20"><path d="M2 17.4c4.4 0 4-5.4 7.6-7.4s4 -5 8.4-7.4" fill="none" stroke="#1f64a6" stroke-width="1.9"/><path d="M19.4 19.4h-4.2l4.2-4.2Z" fill="#333"/></svg>
<svg style="position:absolute;left:890.6px;top:110.7px" width="10.2" height="10.2" viewBox="0 0 20 20"><path d="M1.6 14.6q1.6-9.6 3.6-9.6t2.4 7.6q.6 4 2.2 4t2-4q.6-7.6 2.6-7.6t3 6.4" fill="none" stroke="#1f64a6" stroke-width="1.9"/><path d="M19.4 19.4h-4.2l4.2-4.2Z" fill="#333"/></svg>
<svg style="position:absolute;left:890.6px;top:123.9px" width="10.2" height="10.2" viewBox="0 0 20 20"><circle cx="10" cy="10" r="5.4" fill="#fff" stroke="#f0902c" stroke-width="4"/></svg>
<svg style="position:absolute;left:890.6px;top:136.7px" width="10.2" height="10.2" viewBox="0 0 20 20"><path d="M2 18V10h7V2.6h9V18Z" fill="#1f64a6"/><rect x="11.4" y="5.4" width="4" height="4" fill="#8fc1ee"/></svg>
<svg style="position:absolute;left:890.6px;top:149.9px" width="10.2" height="10.2" viewBox="0 0 20 20"><rect x="3" y="3" width="14" height="14" fill="#fff" stroke="#555" stroke-width="0.9" stroke-dasharray="1.4 1"/><path d="M3 7l4-4M3 11l8-8M3 15L15 3M5 17L17 5M9 17l8-8M13 17l4-4M3 13L7 17M3 5l12 12M7 3l10 10M11 3l6 6" stroke="#4a4a4a" stroke-width="1.1"/></svg>
<svg style="position:absolute;left:890.6px;top:165.7px" width="10.2" height="10.2" viewBox="0 0 20 20"><path d="M2.6 17.4L17.4 2.6" stroke="#3f3f3f" stroke-width="1.5"/></svg>
<svg style="position:absolute;left:890.6px;top:178.9px" width="10.2" height="10.2" viewBox="0 0 20 20"><path d="M2.6 17.4Q4 5 17.4 3.4" fill="none" stroke="#3f3f3f" stroke-width="1.5"/></svg>
<svg style="position:absolute;left:890.6px;top:191.5px" width="10.2" height="10.2" viewBox="0 0 20 20"><rect x="2.6" y="4.6" width="14.8" height="10.8" fill="#9b9b9b" stroke="#3f3f3f" stroke-width="1.5"/></svg>
<svg style="position:absolute;left:890.6px;top:204.3px" width="10.2" height="10.2" viewBox="0 0 20 20"><circle cx="10" cy="10" r="7.2" fill="#9b9b9b" stroke="#3f3f3f" stroke-width="1.5"/></svg>
<svg style="position:absolute;left:890.6px;top:216.9px" width="10.2" height="10.2" viewBox="0 0 20 20"><path d="M3 3.4l13.6 2.4-2.2 5 3 5.8-12.8.6 1.6-6.4Z" fill="#9b9b9b" stroke="#3f3f3f" stroke-width="1.5"/></svg>
<svg style="position:absolute;left:890.6px;top:229.9px" width="10.2" height="10.2" viewBox="0 0 20 20"><path d="M2.4 13.4l15-5" stroke="#1f64a6" stroke-width="1.6"/><path d="M2.4 9.6v7.6M17.4 4.6v7.6" stroke="#1f64a6" stroke-width="1.4"/><path d="M2.6 13.4l3.4-2.8.8 2.6ZM17.4 8.4L14 11.2l-.8-2.6Z" fill="#1f64a6"/></svg>
<svg style="position:absolute;left:890.6px;top:242.7px" width="10.2" height="10.2" viewBox="0 0 20 20"><rect x="2.4" y="3" width="15.2" height="14" rx="1.2" fill="#3f3f3f"/><path d="M4.4 14.8l3.8-5 2.8 3.2 2-2 2.6 3.8Z" fill="#fff"/><circle cx="13.4" cy="7" r="1.5" fill="#fff"/></svg>
<svg style="position:absolute;left:890.6px;top:255.3px" width="10.2" height="10.2" viewBox="0 0 20 20"><path d="M3.4 4h13.2M10 4v13.6" fill="none" stroke="#2f2f2f" stroke-width="2.9"/></svg>
<svg style="position:absolute;left:890.6px;top:267.7px" width="10.2" height="10.2" viewBox="0 0 20 20"><rect x="2.4" y="3.6" width="15.2" height="12.8" fill="#b9b9b9" stroke="#3f3f3f" stroke-width="1.5"/><rect x="5.6" y="7" width="8.8" height="6" fill="#777"/></svg>
<svg style="position:absolute;left:890.6px;top:280.8px" width="10.2" height="10.2" viewBox="0 0 20 20"><rect x="2.4" y="3" width="15.2" height="14" fill="#cfcfcf" stroke="#6a6a6a" stroke-width="1.2"/><path d="M2.4 7.6h15.2M2.4 12.2h15.2M7.4 3v14M12.6 3v14" stroke="#6a6a6a" stroke-width="1"/></svg>
<svg style="position:absolute;left:890.6px;top:295.3px" width="10.2" height="10.2" viewBox="0 0 20 20"><path d="M4 3.6h9.6v9.6" fill="none" stroke="#1f64a6" stroke-width="1.2" stroke-dasharray="1.6 1.2"/><circle cx="4" cy="3.6" r="1.7" fill="#1f64a6"/><circle cx="13.6" cy="13.2" r="1.7" fill="#1f64a6"/><path d="M13.6 16.4v2M16.6 13.2h2" stroke="#333" stroke-width="1"/></svg>
<svg style="position:absolute;left:890.6px;top:307.7px" width="10.2" height="10.2" viewBox="0 0 20 20"><path d="M3.6 2.4l8.8 8-3.8.4 2.2 4.4-1.8.8-2.2-4.4-3.2 2.4Z" fill="#4a3430"/><circle cx="13.4" cy="13.8" r="4.6" fill="#d9343f"/><path d="M10.4 16.4l6-5.2" stroke="#fff" stroke-width="1.5"/></svg>
<svg style="position:absolute;left:890.6px;top:323.4px" width="10.2" height="10.2" viewBox="0 0 20 20"><rect x="3" y="3" width="1.9" height="1.9" fill="#1f64a6"/><rect x="3" y="7" width="1.9" height="1.9" fill="#1f64a6"/><rect x="3" y="11" width="1.9" height="1.9" fill="#1f64a6"/><rect x="3" y="15" width="1.9" height="1.9" fill="#1f64a6"/><rect x="7" y="3" width="1.9" height="1.9" fill="#1f64a6"/><rect x="7" y="7" width="1.9" height="1.9" fill="#1f64a6"/><rect x="7" y="11" width="1.9" height="1.9" fill="#1f64a6"/><rect x="7" y="15" width="1.9" height="1.9" fill="#1f64a6"/><rect x="11" y="3" width="1.9" height="1.9" fill="#1f64a6"/><rect x="11" y="7" width="1.9" height="1.9" fill="#1f64a6"/><rect x="11" y="11" width="1.9" height="1.9" fill="#1f64a6"/><rect x="11" y="15" width="1.9" height="1.9" fill="#1f64a6"/><rect x="15" y="3" width="1.9" height="1.9" fill="#1f64a6"/><rect x="15" y="7" width="1.9" height="1.9" fill="#1f64a6"/><rect x="15" y="11" width="1.9" height="1.9" fill="#1f64a6"/><rect x="15" y="15" width="1.9" height="1.9" fill="#1f64a6"/><path d="M12 9.6v8.8M7.6 14h8.8" stroke="#222" stroke-width="1.2"/><circle cx="12" cy="14" r="2.2" fill="none" stroke="#222" stroke-width="0.9"/></svg>
<svg style="position:absolute;left:890.6px;top:336.9px" width="10.2" height="10.2" viewBox="0 0 20 20"><path d="M2 14.4L14.4 2l3.6 3.6L5.6 18Z" fill="#fff" stroke="#4a4a4a" stroke-width="1.3"/><path d="M5.4 11l1.8 1.8M8 8.4l1.8 1.8M10.6 5.8l1.8 1.8" stroke="#4a4a4a" stroke-width="1"/></svg>
<div class="ap"><div class="hd"><span style="left:1.4px;top:1.1px">Appearance</span></div>
<div class="tabs"><span style="left:8.8px;font-size:5.6px;top:7.8px">Layers</span><span style="left:38.2px">Objects</span><span style="left:72px">Nets</span><div style="left:3.6px;top:16.5px;width:26px;height:1.3px;background:#e2714f"></div></div>
<div class="list">
<div class="row" style="top:0.20px;background:#ececec">
<svg style="position:absolute;left:1.4px;top:2.2px" width="2.6" height="3.4" viewBox="0 0 6 8"><polygon points="0,0 6,4 0,8" fill="#2a56c6"/></svg>
<div class="sw" style="background:#c83434"></div><svg style="position:absolute;left:15.2px;top:0.7px" width="6.4" height="6.4" viewBox="0 0 16 16"><circle cx="8" cy="8" r="6.4" fill="#fff" stroke="#6a6a6a" stroke-width="2.3"/><path d="M3.8 8.6 Q8 4.8 12.2 8.6" fill="none" stroke="#777" stroke-width="1.3"/><line x1="4" y1="12.4" x2="12" y2="3.6" stroke="#5c5c5c" stroke-width="1.9"/></svg><span class="nm">F.Cu</span></div>
<div class="row" style="top:7.86px">
<div class="sw" style="background:#4d7fc4"></div><svg style="position:absolute;left:15.2px;top:0.7px" width="6.4" height="6.4" viewBox="0 0 16 16"><circle cx="8" cy="8" r="6.4" fill="#fff" stroke="#6a6a6a" stroke-width="2.3"/><path d="M3.8 8.6 Q8 4.8 12.2 8.6" fill="none" stroke="#777" stroke-width="1.3"/><line x1="4" y1="12.4" x2="12" y2="3.6" stroke="#5c5c5c" stroke-width="1.9"/></svg><span class="nm">B.Cu</span></div>
<div class="row" style="top:15.52px">
<div class="sw" style="background:#840084"></div><svg style="position:absolute;left:15.2px;top:0.7px" width="6.4" height="6.4" viewBox="0 0 16 16"><circle cx="8" cy="8" r="6.4" fill="#fff" stroke="#6a6a6a" stroke-width="2.3"/><path d="M3.8 8.6 Q8 4.8 12.2 8.6" fill="none" stroke="#777" stroke-width="1.3"/><line x1="4" y1="12.4" x2="12" y2="3.6" stroke="#5c5c5c" stroke-width="1.9"/></svg><span class="nm">F.Adhesive</span></div>
<div class="row" style="top:23.18px">
<div class="sw" style="background:#000084"></div><svg style="position:absolute;left:15.2px;top:0.7px" width="6.4" height="6.4" viewBox="0 0 16 16"><circle cx="8" cy="8" r="6.4" fill="#fff" stroke="#6a6a6a" stroke-width="2.3"/><path d="M3.8 8.6 Q8 4.8 12.2 8.6" fill="none" stroke="#777" stroke-width="1.3"/><line x1="4" y1="12.4" x2="12" y2="3.6" stroke="#5c5c5c" stroke-width="1.9"/></svg><span class="nm">B.Adhesive</span></div>
<div class="row" style="top:30.84px">
<div class="sw" style="background:#a8928e"></div><svg style="position:absolute;left:15.2px;top:0.7px" width="6.4" height="6.4" viewBox="0 0 16 16"><circle cx="8" cy="8" r="7.6" fill="#3e3e3e"/><path d="M2.8 8 Q8 2.8 13.2 8 Q8 13.2 2.8 8Z" fill="#fff"/><circle cx="8" cy="8" r="2.3" fill="#3e3e3e"/></svg><span class="nm">F.Paste</span></div>
<div class="row" style="top:38.50px">
<div class="sw" style="background:#00b0b0"></div><svg style="position:absolute;left:15.2px;top:0.7px" width="6.4" height="6.4" viewBox="0 0 16 16"><circle cx="8" cy="8" r="7.6" fill="#3e3e3e"/><path d="M2.8 8 Q8 2.8 13.2 8 Q8 13.2 2.8 8Z" fill="#fff"/><circle cx="8" cy="8" r="2.3" fill="#3e3e3e"/></svg><span class="nm">B.Paste</span></div>
<div class="row" style="top:46.16px">
<div class="sw" style="background:#f2eda1"></div><svg style="position:absolute;left:15.2px;top:0.7px" width="6.4" height="6.4" viewBox="0 0 16 16"><circle cx="8" cy="8" r="7.6" fill="#3e3e3e"/><path d="M2.8 8 Q8 2.8 13.2 8 Q8 13.2 2.8 8Z" fill="#fff"/><circle cx="8" cy="8" r="2.3" fill="#3e3e3e"/></svg><span class="nm">F.Silkscreen</span></div>
<div class="row" style="top:53.82px">
<div class="sw" style="background:#e8b2a7"></div><svg style="position:absolute;left:15.2px;top:0.7px" width="6.4" height="6.4" viewBox="0 0 16 16"><circle cx="8" cy="8" r="7.6" fill="#3e3e3e"/><path d="M2.8 8 Q8 2.8 13.2 8 Q8 13.2 2.8 8Z" fill="#fff"/><circle cx="8" cy="8" r="2.3" fill="#3e3e3e"/></svg><span class="nm">B.Silkscreen</span></div>
<div class="row" style="top:61.48px">
<div class="sw" style="background:#5b2a6b"></div><svg style="position:absolute;left:15.2px;top:0.7px" width="6.4" height="6.4" viewBox="0 0 16 16"><circle cx="8" cy="8" r="7.6" fill="#3e3e3e"/><path d="M2.8 8 Q8 2.8 13.2 8 Q8 13.2 2.8 8Z" fill="#fff"/><circle cx="8" cy="8" r="2.3" fill="#3e3e3e"/></svg><span class="nm">F.Mask</span></div>
<div class="row" style="top:69.14px">
<div class="sw" style="background:#0a6a66"></div><svg style="position:absolute;left:15.2px;top:0.7px" width="6.4" height="6.4" viewBox="0 0 16 16"><circle cx="8" cy="8" r="7.6" fill="#3e3e3e"/><path d="M2.8 8 Q8 2.8 13.2 8 Q8 13.2 2.8 8Z" fill="#fff"/><circle cx="8" cy="8" r="2.3" fill="#3e3e3e"/></svg><span class="nm">B.Mask</span></div>
<div class="row" style="top:76.80px">
<div class="sw" style="background:#c2c2c2"></div><svg style="position:absolute;left:15.2px;top:0.7px" width="6.4" height="6.4" viewBox="0 0 16 16"><circle cx="8" cy="8" r="7.6" fill="#3e3e3e"/><path d="M2.8 8 Q8 2.8 13.2 8 Q8 13.2 2.8 8Z" fill="#fff"/><circle cx="8" cy="8" r="2.3" fill="#3e3e3e"/></svg><span class="nm">User.Drawings</span></div>
<div class="row" style="top:84.46px">
<div class="sw" style="background:#5994dc"></div><svg style="position:absolute;left:15.2px;top:0.7px" width="6.4" height="6.4" viewBox="0 0 16 16"><circle cx="8" cy="8" r="7.6" fill="#3e3e3e"/><path d="M2.8 8 Q8 2.8 13.2 8 Q8 13.2 2.8 8Z" fill="#fff"/><circle cx="8" cy="8" r="2.3" fill="#3e3e3e"/></svg><span class="nm">User.Comments</span></div>
<div class="row" style="top:92.12px">
<div class="sw" style="background:#b4dbd2"></div><svg style="position:absolute;left:15.2px;top:0.7px" width="6.4" height="6.4" viewBox="0 0 16 16"><circle cx="8" cy="8" r="7.6" fill="#3e3e3e"/><path d="M2.8 8 Q8 2.8 13.2 8 Q8 13.2 2.8 8Z" fill="#fff"/><circle cx="8" cy="8" r="2.3" fill="#3e3e3e"/></svg><span class="nm">User.Eco1</span></div>
<div class="row" style="top:99.78px">
<div class="sw" style="background:#d8c852"></div><svg style="position:absolute;left:15.2px;top:0.7px" width="6.4" height="6.4" viewBox="0 0 16 16"><circle cx="8" cy="8" r="7.6" fill="#3e3e3e"/><path d="M2.8 8 Q8 2.8 13.2 8 Q8 13.2 2.8 8Z" fill="#fff"/><circle cx="8" cy="8" r="2.3" fill="#3e3e3e"/></svg><span class="nm">User.Eco2</span></div>
<div class="row" style="top:107.44px">
<div class="sw" style="background:#d0d2cd"></div><svg style="position:absolute;left:15.2px;top:0.7px" width="6.4" height="6.4" viewBox="0 0 16 16"><circle cx="8" cy="8" r="7.6" fill="#3e3e3e"/><path d="M2.8 8 Q8 2.8 13.2 8 Q8 13.2 2.8 8Z" fill="#fff"/><circle cx="8" cy="8" r="2.3" fill="#3e3e3e"/></svg><span class="nm">Edge.Cuts</span></div>
<div class="row" style="top:115.10px">
<div class="sw" style="background:#ff26e2"></div><svg style="position:absolute;left:15.2px;top:0.7px" width="6.4" height="6.4" viewBox="0 0 16 16"><circle cx="8" cy="8" r="7.6" fill="#3e3e3e"/><path d="M2.8 8 Q8 2.8 13.2 8 Q8 13.2 2.8 8Z" fill="#fff"/><circle cx="8" cy="8" r="2.3" fill="#3e3e3e"/></svg><span class="nm">Margin</span></div>
<div class="row" style="top:122.76px">
<div class="sw" style="background:#ff26e2"></div><svg style="position:absolute;left:15.2px;top:0.7px" width="6.4" height="6.4" viewBox="0 0 16 16"><circle cx="8" cy="8" r="7.6" fill="#3e3e3e"/><path d="M2.8 8 Q8 2.8 13.2 8 Q8 13.2 2.8 8Z" fill="#fff"/><circle cx="8" cy="8" r="2.3" fill="#3e3e3e"/></svg><span class="nm">F.Courtyard</span></div>
<div class="row" style="top:130.42px">
<div class="sw" style="background:#26e9ff"></div><svg style="position:absolute;left:15.2px;top:0.7px" width="6.4" height="6.4" viewBox="0 0 16 16"><circle cx="8" cy="8" r="7.6" fill="#3e3e3e"/><path d="M2.8 8 Q8 2.8 13.2 8 Q8 13.2 2.8 8Z" fill="#fff"/><circle cx="8" cy="8" r="2.3" fill="#3e3e3e"/></svg><span class="nm">B.Courtyard</span></div>
<div class="row" style="top:138.08px">
<div class="sw" style="background:#afafaf"></div><svg style="position:absolute;left:15.2px;top:0.7px" width="6.4" height="6.4" viewBox="0 0 16 16"><circle cx="8" cy="8" r="7.6" fill="#3e3e3e"/><path d="M2.8 8 Q8 2.8 13.2 8 Q8 13.2 2.8 8Z" fill="#fff"/><circle cx="8" cy="8" r="2.3" fill="#3e3e3e"/></svg><span class="nm">F.Fab</span></div>
<div class="row" style="top:145.74px">
<div class="sw" style="background:#585d84"></div><svg style="position:absolute;left:15.2px;top:0.7px" width="6.4" height="6.4" viewBox="0 0 16 16"><circle cx="8" cy="8" r="7.6" fill="#3e3e3e"/><path d="M2.8 8 Q8 2.8 13.2 8 Q8 13.2 2.8 8Z" fill="#fff"/><circle cx="8" cy="8" r="2.3" fill="#3e3e3e"/></svg><span class="nm">B.Fab</span></div>
<div class="row" style="top:153.40px">
<div class="sw" style="background:#c2c2c2"></div><svg style="position:absolute;left:15.2px;top:0.7px" width="6.4" height="6.4" viewBox="0 0 16 16"><circle cx="8" cy="8" r="7.6" fill="#3e3e3e"/><path d="M2.8 8 Q8 2.8 13.2 8 Q8 13.2 2.8 8Z" fill="#fff"/><circle cx="8" cy="8" r="2.3" fill="#3e3e3e"/></svg><span class="nm">User.1</span></div>
<div class="row" style="top:161.06px">
<div class="sw" style="background:#5994dc"></div><svg style="position:absolute;left:15.2px;top:0.7px" width="6.4" height="6.4" viewBox="0 0 16 16"><circle cx="8" cy="8" r="7.6" fill="#3e3e3e"/><path d="M2.8 8 Q8 2.8 13.2 8 Q8 13.2 2.8 8Z" fill="#fff"/><circle cx="8" cy="8" r="2.3" fill="#3e3e3e"/></svg><span class="nm">User.2</span></div>
<div class="row" style="top:168.72px">
<div class="sw" style="background:#b4dbd2"></div><svg style="position:absolute;left:15.2px;top:0.7px" width="6.4" height="6.4" viewBox="0 0 16 16"><circle cx="8" cy="8" r="7.6" fill="#3e3e3e"/><path d="M2.8 8 Q8 2.8 13.2 8 Q8 13.2 2.8 8Z" fill="#fff"/><circle cx="8" cy="8" r="2.3" fill="#3e3e3e"/></svg><span class="nm">User.3</span></div>
<div class="row" style="top:176.38px">
<div class="sw" style="background:#d8c852"></div><svg style="position:absolute;left:15.2px;top:0.7px" width="6.4" height="6.4" viewBox="0 0 16 16"><circle cx="8" cy="8" r="7.6" fill="#3e3e3e"/><path d="M2.8 8 Q8 2.8 13.2 8 Q8 13.2 2.8 8Z" fill="#fff"/><circle cx="8" cy="8" r="2.3" fill="#3e3e3e"/></svg><span class="nm">User.4</span></div>
</div>
<svg style="position:absolute;left:4.0px;top:366.6px" width="2.4" height="3.4" viewBox="0 0 6 8"><polygon points="0,0 6,4 0,8" fill="#111"/></svg>
<span class="lbl" style="left:6.6px;top:365.6px;color:#1c1c1c;font-size:5.6px">Layer Display Options</span>
<span class="lbl" style="left:3.8px;top:378.6px">Presets (Ctrl+Tab):</span>
<div class="dd" style="left:4.6px;top:386.3px;width:88.8px;height:11.8px;border:none"><span class="x" style="left:4.6px;top:2.6px">---</span></div><svg style="position:absolute;left:85.0px;top:391.40000000000003px" width="3.6" height="2.6" viewBox="0 0 10 6.5"><polyline points="0.8,0.8 5,5.2 9.2,0.8" fill="none" stroke="#555" stroke-width="1.5"/></svg>
<span class="lbl" style="left:3.8px;top:401.2px">Viewports (Shift+Tab):</span>
<div class="dd" style="left:4.6px;top:408.8px;width:88.8px;height:12.4px;border:none"><span class="x" style="left:4.6px;top:3px">---</span></div><svg style="position:absolute;left:85.0px;top:414.3px" width="3.6" height="2.6" viewBox="0 0 10 6.5"><polyline points="0.8,0.8 5,5.2 9.2,0.8" fill="none" stroke="#555" stroke-width="1.5"/></svg>
<div style="left:0.8px;top:426.1px;width:96px;height:6.4px;background:#c9c9c9"><span style="left:1.0px;top:0.9px;font-size:4.9px;color:#333">Selection Filter</span></div>
<div class="cb" style="left:5.6px;top:436.60px"><svg style="position:absolute;left:0.6px;top:0.7px" width="4" height="3.8" viewBox="0 0 10 10"><polyline points="1.4,5.4 4,8 8.8,1.8" fill="none" stroke="#fff" stroke-width="2"/></svg></div><span class="lbl" style="left:12.8px;top:436.90px">All items</span>
<div class="cb0" style="left:48.6px;top:436.60px"></div>
<span class="lbl" style="left:56px;top:436.90px">Locked items</span>
<div class="cb" style="left:5.6px;top:445.02px"><svg style="position:absolute;left:0.6px;top:0.7px" width="4" height="3.8" viewBox="0 0 10 10"><polyline points="1.4,5.4 4,8 8.8,1.8" fill="none" stroke="#fff" stroke-width="2"/></svg></div><span class="lbl" style="left:12.8px;top:445.32px">Footprints</span>
<div class="cb" style="left:48.6px;top:445.02px"><svg style="position:absolute;left:0.6px;top:0.7px" width="4" height="3.8" viewBox="0 0 10 10"><polyline points="1.4,5.4 4,8 8.8,1.8" fill="none" stroke="#fff" stroke-width="2"/></svg></div>
<span class="lbl" style="left:56px;top:445.32px">Text</span>
<div class="cb" style="left:5.6px;top:453.44px"><svg style="position:absolute;left:0.6px;top:0.7px" width="4" height="3.8" viewBox="0 0 10 10"><polyline points="1.4,5.4 4,8 8.8,1.8" fill="none" stroke="#fff" stroke-width="2"/></svg></div><span class="lbl" style="left:12.8px;top:453.74px">Tracks</span>
<div class="cb" style="left:48.6px;top:453.44px"><svg style="position:absolute;left:0.6px;top:0.7px" width="4" height="3.8" viewBox="0 0 10 10"><polyline points="1.4,5.4 4,8 8.8,1.8" fill="none" stroke="#fff" stroke-width="2"/></svg></div>
<span class="lbl" style="left:56px;top:453.74px">Vias</span>
<div class="cb" style="left:5.6px;top:461.86px"><svg style="position:absolute;left:0.6px;top:0.7px" width="4" height="3.8" viewBox="0 0 10 10"><polyline points="1.4,5.4 4,8 8.8,1.8" fill="none" stroke="#fff" stroke-width="2"/></svg></div><span class="lbl" style="left:12.8px;top:462.16px">Pads</span>
<div class="cb" style="left:48.6px;top:461.86px"><svg style="position:absolute;left:0.6px;top:0.7px" width="4" height="3.8" viewBox="0 0 10 10"><polyline points="1.4,5.4 4,8 8.8,1.8" fill="none" stroke="#fff" stroke-width="2"/></svg></div>
<span class="lbl" style="left:56px;top:462.16px">Graphics</span>
<div class="cb" style="left:5.6px;top:470.28px"><svg style="position:absolute;left:0.6px;top:0.7px" width="4" height="3.8" viewBox="0 0 10 10"><polyline points="1.4,5.4 4,8 8.8,1.8" fill="none" stroke="#fff" stroke-width="2"/></svg></div><span class="lbl" style="left:12.8px;top:470.58px">Zones</span>
<div class="cb" style="left:48.6px;top:470.28px"><svg style="position:absolute;left:0.6px;top:0.7px" width="4" height="3.8" viewBox="0 0 10 10"><polyline points="1.4,5.4 4,8 8.8,1.8" fill="none" stroke="#fff" stroke-width="2"/></svg></div>
<span class="lbl" style="left:56px;top:470.58px">Rule Areas</span>
<div class="cb" style="left:5.6px;top:478.70px"><svg style="position:absolute;left:0.6px;top:0.7px" width="4" height="3.8" viewBox="0 0 10 10"><polyline points="1.4,5.4 4,8 8.8,1.8" fill="none" stroke="#fff" stroke-width="2"/></svg></div><span class="lbl" style="left:12.8px;top:479.00px">Dimensions</span>
<div class="cb" style="left:48.6px;top:478.70px"><svg style="position:absolute;left:0.6px;top:0.7px" width="4" height="3.8" viewBox="0 0 10 10"><polyline points="1.4,5.4 4,8 8.8,1.8" fill="none" stroke="#fff" stroke-width="2"/></svg></div>
<span class="lbl" style="left:56px;top:479.00px">Other items</span>
</div>
<div class="bot">
<span style="left:5px;top:1.8px">Pads</span><span style="left:5px;top:9.2px">193</span>
<span style="left:30px;top:1.8px">Vias</span><span style="left:30px;top:9.2px">54</span>
<span style="left:54px;top:1.8px">Track Segments</span><span style="left:54px;top:9.2px">458</span>
<span style="left:108.2px;top:1.8px">Nets</span><span style="left:108.2px;top:9.2px">53</span>
<span style="left:133.2px;top:1.8px">Unrouted</span><span style="left:133.2px;top:9.2px">0</span>
<div style="left:0;top:15.4px;width:1000px;height:0.6px;background:#dddddd"></div>
<span class="st" style="left:1.5px;top:17.2px;font-size:6.05px">File '/home/kai/projects/pcbs/working/devboard/PCB_DESIGN/devboard.kicad_pcb' saved.</span>
<span class="st" style="left:506.4px;top:17.2px">Z 13.78</span>
<span class="st" style="left:540.0px;top:17.2px">X 140.9000  Y 83.3000</span>
<span class="st" style="left:616.4px;top:17.2px">dx 140.9000  dy 83.3000  dist 163.6817</span>
<span class="st" style="left:740.0px;top:17.2px">grid 0.1000</span>
<span class="st" style="left:829.0px;top:17.2px">mm</span>
<span class="st" style="left:856.0px;top:17.2px">Select item(s)</span>
</div>
<svg id="pcb" viewBox="12.6 52.7 875.7 487.1" style="position:absolute;left:12.6px;top:52.7px;width:875.7px;height:487.1px;overflow:hidden;display:block">
<defs><pattern id="grid" x="12.66" y="18.8" width="19.83" height="19.83" patternUnits="userSpaceOnUse"><rect x="0" y="0" width="0.9" height="0.9" fill="#1f2c44"/></pattern></defs>
<rect x="0" y="0" width="1000" height="564" fill="#001023"/>
<rect x="0" y="0" width="1000" height="564" fill="url(#grid)"/>
<g font-family="'DejaVu Sans','Liberation Sans',sans-serif">
<text transform="translate(445.8,456.8) rotate(-90)" font-size="29.08" fill="#b2b4b6" stroke="#b2b4b6" stroke-width="0.7" stroke-linejoin="round" textLength="18" lengthAdjust="spacingAndGlyphs">M</text>
<text transform="translate(445.8,438.4) rotate(-90)" font-size="29.08" fill="#b2b4b6" stroke="#b2b4b6" stroke-width="0.7" stroke-linejoin="round" textLength="132.4" lengthAdjust="spacingAndGlyphs">CP1700x</text>
<text transform="translate(445.8,305.8) rotate(-90)" font-size="29.08" fill="#b2b4b6" stroke="#b2b4b6" stroke-width="0.7" stroke-linejoin="round" textLength="82.6" lengthAdjust="spacingAndGlyphs">-330</text>
<text transform="translate(445.8,223.8) rotate(-90)" font-size="29.08" fill="#b2b4b6" stroke="#b2b4b6" stroke-width="0.7" stroke-linejoin="round" textLength="64.4" lengthAdjust="spacingAndGlyphs">xxTT</text>
<text transform="translate(451.2,290.8) rotate(-90)" font-size="29.63" fill="#b2b4b6" stroke="#b2b4b6" stroke-width="0.7" stroke-linejoin="round" textLength="66.2" lengthAdjust="spacingAndGlyphs">3.3V</text>
<text transform="translate(457.6,416.7) rotate(-90)" font-size="29.36" fill="#b2b4b6" stroke="#b2b4b6" stroke-width="0.7" stroke-linejoin="round" textLength="125.5" lengthAdjust="spacingAndGlyphs">SW_Push</text>
<text transform="translate(507,382.2) rotate(-90)" font-size="30.18" fill="#b2b4b6" stroke="#b2b4b6" stroke-width="0.7" stroke-linejoin="round" textLength="58.6" lengthAdjust="spacingAndGlyphs">SW1</text>
<text transform="translate(419.4,140.6)" font-size="31" fill="#b2b4b6" stroke="#b2b4b6" stroke-width="0.7" stroke-linejoin="round" textLength="34" lengthAdjust="spacingAndGlyphs"><tspan font-family="Liberation Sans">J</tspan>1</text>
<text transform="translate(334.2,233.8)" font-size="28.26" fill="#b2b4b6" stroke="#b2b4b6" stroke-width="0.7" stroke-linejoin="round" textLength="75.2" lengthAdjust="spacingAndGlyphs">10uF</text>
<text transform="translate(354.4,348)" font-size="27.98" fill="#b2b4b6" stroke="#b2b4b6" stroke-width="0.7" stroke-linejoin="round" textLength="67" lengthAdjust="spacingAndGlyphs">10uF</text>
<text transform="translate(349.3,461.2)" font-size="29.77" fill="#b2b4b6" stroke="#b2b4b6" stroke-width="0.7" stroke-linejoin="round" textLength="74.4" lengthAdjust="spacingAndGlyphs">0.1uF</text>
<text transform="translate(488.6,454)" font-size="30.32" fill="#b2b4b6" stroke="#b2b4b6" stroke-width="0.7" stroke-linejoin="round" textLength="36.6" lengthAdjust="spacingAndGlyphs">1K</text>
<text transform="translate(324.3,507.5)" font-size="27.71" fill="#b2b4b6" stroke="#b2b4b6" stroke-width="0.7" stroke-linejoin="round" textLength="57.1" lengthAdjust="spacingAndGlyphs">10K</text>
<text transform="translate(359.1,520.8)" font-size="21.26" fill="#b2b4b6" stroke="#b2b4b6" stroke-width="0.7" stroke-linejoin="round" textLength="28.8" lengthAdjust="spacingAndGlyphs">U4</text>
<text transform="translate(510,532.2) rotate(-90)" font-size="29.22" fill="#b2b4b6" stroke="#b2b4b6" stroke-width="0.7" stroke-linejoin="round" textLength="81.6" lengthAdjust="spacingAndGlyphs">0.1uF</text>
<text transform="translate(487.7,549.2) rotate(-90)" font-size="29.08" fill="#b2b4b6" stroke="#b2b4b6" stroke-width="0.7" stroke-linejoin="round" textLength="84.6" lengthAdjust="spacingAndGlyphs">0.1uF</text>
<text transform="translate(528,607.2) rotate(-90)" font-size="30.18" fill="#b2b4b6" stroke="#b2b4b6" stroke-width="0.7" stroke-linejoin="round" textLength="81.6" lengthAdjust="spacingAndGlyphs">0.1uF</text>
<text transform="translate(468,561.2) rotate(-90)" font-size="30.18" fill="#b2b4b6" stroke="#b2b4b6" stroke-width="0.7" stroke-linejoin="round" textLength="81.6" lengthAdjust="spacingAndGlyphs">0.1uF</text>
<text transform="translate(431,566.2) rotate(-90)" font-size="30.18" fill="#b2b4b6" stroke="#b2b4b6" stroke-width="0.7" stroke-linejoin="round" textLength="83.6" lengthAdjust="spacingAndGlyphs">0.1uF</text>
<rect x="330.6" y="0" width="211" height="234.3" fill="none" stroke="#a21eb0" stroke-width="1.1"/>
<rect x="347.5" y="57.8" width="177.8" height="144.1" fill="none" stroke="#b2b4b6" stroke-width="1.7"/>
<line x1="343" y1="53.4" x2="343" y2="90.4" stroke="#f2eda1" stroke-width="2.5" stroke-linecap="round"/>
<line x1="343" y1="127.2" x2="343" y2="168.6" stroke="#f2eda1" stroke-width="2.5" stroke-linecap="round"/>
<line x1="529.6" y1="53.4" x2="529.6" y2="90.4" stroke="#f2eda1" stroke-width="2.5" stroke-linecap="round"/>
<line x1="529.6" y1="127.2" x2="529.6" y2="168.6" stroke="#f2eda1" stroke-width="2.5" stroke-linecap="round"/>
<line x1="343" y1="53.4" x2="529.6" y2="53.4" stroke="#f2eda1" stroke-width="2.5" stroke-linecap="round"/>
<rect x="468.6" y="314" width="56.1" height="77.6" fill="none" stroke="#b2b4b6" stroke-width="1.7"/>
<circle cx="496.6" cy="353.3" r="19.3" fill="none" stroke="#b2b4b6" stroke-width="1.7"/>
<polygon points="358.4,296.6 417.2,296.6 417.2,322.4 364.5,322.4 358.4,316.2" fill="none" stroke="#b2b4b6" stroke-width="1.7" stroke-linejoin="round" stroke-linecap="round"/>
<text transform="translate(391.2,314.5) rotate(-90)" font-size="8.92" fill="#b2b4b6" textLength="12" lengthAdjust="spacingAndGlyphs">U2</text>
<rect x="342.3" y="493.3" width="60" height="39" fill="none" stroke="#b2b4b6" stroke-width="1.7"/>
<rect x="352.9" y="244.6" width="31.4" height="15.8" fill="none" stroke="#b2b4b6" stroke-width="1.2"/>
<rect x="372.8" y="359.2" width="31.4" height="15.6" fill="none" stroke="#b2b4b6" stroke-width="1.2"/>
<rect x="224.8" y="72.8" width="70.5" height="527.2" fill="none" stroke="#a21eb0" stroke-width="1.1"/>
<polyline points="234.8,600 234.8,95 247.4,82.6 285.2,82.6 285.2,600" fill="none" stroke="#b2b4b6" stroke-width="1.6" stroke-linejoin="round" stroke-linecap="round"/>
<polyline points="233.3,107.6 233.3,80.5 260.3,80.5" fill="none" stroke="#f2eda1" stroke-width="2.5" stroke-linejoin="round" stroke-linecap="round"/>
<rect x="233.3" y="133" width="53.4" height="467" fill="none" stroke="#f2eda1" stroke-width="2.5"/>
<rect x="577.3" y="72.8" width="70.5" height="527.2" fill="none" stroke="#a21eb0" stroke-width="1.1"/>
<polyline points="587.3,600 587.3,95 599.9,82.6 637.7,82.6 637.7,600" fill="none" stroke="#b2b4b6" stroke-width="1.6" stroke-linejoin="round" stroke-linecap="round"/>
<polyline points="585.8,107.6 585.8,80.5 612.8,80.5" fill="none" stroke="#f2eda1" stroke-width="2.5" stroke-linejoin="round" stroke-linecap="round"/>
<rect x="585.8" y="133" width="53.4" height="467" fill="none" stroke="#f2eda1" stroke-width="2.5"/>
<rect x="339" y="237.9" width="58.3" height="29.1" fill="none" stroke="#a21eb0" stroke-width="1.1"/>
<rect x="400" y="238.4" width="19.4" height="36.1" fill="none" stroke="#a21eb0" stroke-width="1.1"/>
<rect x="454.2" y="236.6" width="19.5" height="37.2" fill="none" stroke="#a21eb0" stroke-width="1.1"/>
<rect x="359.2" y="352.4" width="59.5" height="29.1" fill="none" stroke="#a21eb0" stroke-width="1.1"/>
<rect x="462.6" y="298.5" width="67.9" height="109.3" fill="none" stroke="#a21eb0" stroke-width="1.1"/>
<rect x="487.5" y="411" width="37.2" height="19" fill="none" stroke="#a21eb0" stroke-width="1.1"/>
<rect x="332.6" y="465" width="36.9" height="18" fill="none" stroke="#a21eb0" stroke-width="1.1"/>
<rect x="369.5" y="465" width="38.5" height="18" fill="none" stroke="#a21eb0" stroke-width="1.1"/>
<rect x="427.9" y="487.4" width="17.3" height="36.2" fill="none" stroke="#a21eb0" stroke-width="1.1"/>
<rect x="448" y="487.4" width="18.3" height="37.2" fill="none" stroke="#a21eb0" stroke-width="1.1"/>
<rect x="466.6" y="472.8" width="19.4" height="35.7" fill="none" stroke="#a21eb0" stroke-width="1.1"/>
<rect x="440.2" y="537.5" width="20" height="22.5" fill="none" stroke="#a21eb0" stroke-width="1.1"/>
<rect x="460.2" y="537.5" width="17.2" height="22.5" fill="none" stroke="#a21eb0" stroke-width="1.1"/>
<polygon points="377.1,271.5 398.5,271.5 398.5,291.9 421.9,291.9 421.9,327 418.2,327 418.2,347.2 357,347.2 357,327 353.3,327 353.3,291.9 377.1,291.9" fill="none" stroke="#a21eb0" stroke-width="1.1" stroke-linejoin="round" stroke-linecap="round"/>
<polygon points="330.3,487.3 415.6,487.3 415.6,528 408.5,528 408.5,535.3 337.7,535.3 337.7,528 330.3,528" fill="none" stroke="#a21eb0" stroke-width="1.1" stroke-linejoin="round" stroke-linecap="round"/>
<g fill="#bba7a1" opacity="0.9">
<rect x="367.19" y="196" width="11.5" height="28.6" rx="0.3"/>
<rect x="494.11" y="196" width="11.5" height="28.6" rx="0.3"/>
<rect x="383.06" y="196" width="11.5" height="28.6" rx="0.3"/>
<rect x="478.24" y="196" width="11.5" height="28.6" rx="0.3"/>
<rect x="398.92" y="196" width="5.55" height="28.6" rx="0.3"/>
<rect x="468.33" y="196" width="5.55" height="28.6" rx="0.3"/>
<rect x="408.84" y="196" width="5.55" height="28.6" rx="0.3"/>
<rect x="458.41" y="196" width="5.55" height="28.6" rx="0.3"/>
<rect x="418.75" y="196" width="5.55" height="28.6" rx="0.3"/>
<rect x="448.5" y="196" width="5.55" height="28.6" rx="0.3"/>
<rect x="428.67" y="196" width="5.55" height="28.6" rx="0.3"/>
<rect x="438.58" y="196" width="5.55" height="28.6" rx="0.3"/>
<rect x="344" y="243.3" width="17" height="18.4" rx="4.5"/>
<rect x="376" y="243.3" width="17.3" height="18.4" rx="4.5"/>
<rect x="403" y="241.4" width="13" height="11.3" rx="3"/>
<rect x="403" y="261" width="13" height="11" rx="3"/>
<rect x="457.6" y="239.9" width="12.4" height="11.6" rx="3"/>
<rect x="457.6" y="259.6" width="12.4" height="11" rx="3"/>
<rect x="381.8" y="275.6" width="12.1" height="30.1" rx="3.5"/>
<rect x="363" y="314" width="12" height="28" rx="3.5"/>
<rect x="400.7" y="314" width="12" height="28" rx="3.5"/>
<rect x="364.2" y="357.8" width="16.6" height="18.8" rx="4.5"/>
<rect x="395.9" y="357.8" width="16.8" height="18.8" rx="4.5"/>
<rect x="477" y="303.7" width="39" height="15.8" rx="4.5"/>
<rect x="477" y="387.2" width="39" height="15.4" rx="4.5"/>
<rect x="490.5" y="414.2" width="11" height="12.2" rx="3"/>
<rect x="510.5" y="414.2" width="10.9" height="12.2" rx="3"/>
<rect x="336.4" y="468.7" width="10.8" height="11.3" rx="3"/>
<rect x="355.5" y="468.7" width="11" height="11.3" rx="3"/>
<rect x="374.8" y="468.7" width="10.7" height="11.3" rx="3"/>
<rect x="393.7" y="468.7" width="11" height="11.3" rx="3"/>
<rect x="336.3" y="495.2" width="17.2" height="5.2" rx="1.2"/>
<rect x="392.5" y="495.2" width="17.3" height="5.2" rx="1.2"/>
<rect x="336.3" y="505.2" width="17.2" height="5.2" rx="1.2"/>
<rect x="392.5" y="505.2" width="17.3" height="5.2" rx="1.2"/>
<rect x="336.3" y="515.3" width="17.2" height="5.2" rx="1.2"/>
<rect x="392.5" y="515.3" width="17.3" height="5.2" rx="1.2"/>
<rect x="336.3" y="525.3" width="17.2" height="5.2" rx="1.2"/>
<rect x="392.5" y="525.3" width="17.3" height="5.2" rx="1.2"/>
<rect x="370.8" y="498.5" width="3.7" height="30" rx="0.5"/>
<rect x="430.2" y="489.7" width="13.5" height="13.5" rx="3.5"/>
<rect x="430.2" y="510" width="13.5" height="11.3" rx="3.5"/>
<rect x="451" y="490.9" width="12.3" height="11.6" rx="3"/>
<rect x="451" y="510" width="12.3" height="11.3" rx="3"/>
<rect x="470.1" y="476.1" width="12.5" height="11.3" rx="3"/>
<rect x="470.1" y="495" width="12.5" height="10.5" rx="3"/>
</g>
<rect x="361.5" y="245" width="14.1" height="15" fill="#0c1426" stroke="#8d9096" stroke-width="0.8"/>
<text transform="translate(368.55,255.2)" font-size="7.41" fill="#b9bbc2" textLength="12.69" lengthAdjust="spacingAndGlyphs" text-anchor="middle">C13</text>
<rect x="381.3" y="359.4" width="14.1" height="15.2" fill="#0c1426" stroke="#8d9096" stroke-width="0.8"/>
<text transform="translate(388.35,369.7)" font-size="7.41" fill="#b9bbc2" textLength="12.69" lengthAdjust="spacingAndGlyphs" text-anchor="middle">C14</text>
<rect x="404.8" y="251.8" width="9.4" height="9.8" fill="#0c1426" stroke="#8d9096" stroke-width="0.8"/>
<text transform="translate(412.1,256.7) rotate(-90)" font-size="7.13" fill="#b9bbc2" textLength="8.33" lengthAdjust="spacingAndGlyphs" text-anchor="middle">R1</text>
<rect x="459.3" y="250.6" width="9.1" height="9.8" fill="#0c1426" stroke="#8d9096" stroke-width="0.8"/>
<text transform="translate(466.45,255.5) rotate(-90)" font-size="7.13" fill="#b9bbc2" textLength="8.33" lengthAdjust="spacingAndGlyphs" text-anchor="middle">R2</text>
<rect x="501.2" y="415.3" width="9.6" height="10" fill="#0c1426" stroke="#8d9096" stroke-width="0.8"/>
<text transform="translate(506,423)" font-size="7.41" fill="#b9bbc2" textLength="8.64" lengthAdjust="spacingAndGlyphs" text-anchor="middle">R6</text>
<rect x="346.9" y="469.6" width="8.9" height="9.6" fill="#0c1426" stroke="#8d9096" stroke-width="0.8"/>
<text transform="translate(351.35,477.1)" font-size="7.41" fill="#b9bbc2" textLength="8.01" lengthAdjust="spacingAndGlyphs" text-anchor="middle">R7</text>
<rect x="385.2" y="469.6" width="8.8" height="9.6" fill="#0c1426" stroke="#8d9096" stroke-width="0.8"/>
<text transform="translate(389.6,477.1)" font-size="7.41" fill="#b9bbc2" textLength="7.92" lengthAdjust="spacingAndGlyphs" text-anchor="middle">C1</text>
<rect x="432.2" y="502.3" width="9.6" height="8.5" fill="#0c1426" stroke="#8d9096" stroke-width="0.8"/>
<text transform="translate(439.6,506.55) rotate(-90)" font-size="7.13" fill="#b9bbc2" textLength="7.22" lengthAdjust="spacingAndGlyphs" text-anchor="middle">C18</text>
<rect x="452.6" y="501.8" width="9.2" height="8.8" fill="#0c1426" stroke="#8d9096" stroke-width="0.8"/>
<text transform="translate(459.8,506.2) rotate(-90)" font-size="7.13" fill="#b9bbc2" textLength="7.48" lengthAdjust="spacingAndGlyphs" text-anchor="middle">C17</text>
<rect x="471.7" y="486.8" width="9.3" height="8.8" fill="#0c1426" stroke="#8d9096" stroke-width="0.8"/>
<text transform="translate(478.95,491.2) rotate(-90)" font-size="7.13" fill="#b9bbc2" textLength="7.48" lengthAdjust="spacingAndGlyphs" text-anchor="middle">C9</text>
<line x1="365" y1="242" x2="372.6" y2="242" stroke="#f2eda1" stroke-width="2.2" stroke-linecap="butt"/>
<line x1="365" y1="263" x2="372.6" y2="263" stroke="#f2eda1" stroke-width="2.2" stroke-linecap="butt"/>
<line x1="385" y1="356.5" x2="392.2" y2="356.5" stroke="#f2eda1" stroke-width="2.2" stroke-linecap="butt"/>
<line x1="385" y1="378" x2="392.2" y2="378" stroke="#f2eda1" stroke-width="2.2" stroke-linecap="butt"/>
<line x1="502.8" y1="413" x2="509.6" y2="413" stroke="#f2eda1" stroke-width="2.2" stroke-linecap="butt"/>
<line x1="502.8" y1="428" x2="509.6" y2="428" stroke="#f2eda1" stroke-width="2.2" stroke-linecap="butt"/>
<line x1="348.4" y1="467.2" x2="354.4" y2="467.2" stroke="#f2eda1" stroke-width="2.2" stroke-linecap="butt"/>
<line x1="348.4" y1="481.4" x2="354.4" y2="481.4" stroke="#f2eda1" stroke-width="2.2" stroke-linecap="butt"/>
<line x1="386.6" y1="467.2" x2="392.6" y2="467.2" stroke="#f2eda1" stroke-width="2.2" stroke-linecap="butt"/>
<line x1="386.6" y1="481.4" x2="392.6" y2="481.4" stroke="#f2eda1" stroke-width="2.2" stroke-linecap="butt"/>
<line x1="401.9" y1="253.3" x2="401.9" y2="259.8" stroke="#f2eda1" stroke-width="2.2" stroke-linecap="butt"/>
<line x1="417" y1="253.3" x2="417" y2="259.8" stroke="#f2eda1" stroke-width="2.2" stroke-linecap="butt"/>
<line x1="456" y1="251.6" x2="456" y2="259.2" stroke="#f2eda1" stroke-width="2.2" stroke-linecap="butt"/>
<line x1="471.8" y1="251.6" x2="471.8" y2="259.2" stroke="#f2eda1" stroke-width="2.2" stroke-linecap="butt"/>
<line x1="468.9" y1="488.4" x2="468.9" y2="494.2" stroke="#f2eda1" stroke-width="2.2" stroke-linecap="butt"/>
<line x1="483.8" y1="488.4" x2="483.8" y2="494.2" stroke="#f2eda1" stroke-width="2.2" stroke-linecap="butt"/>
<line x1="428.9" y1="503.6" x2="428.9" y2="509.6" stroke="#f2eda1" stroke-width="2.2" stroke-linecap="butt"/>
<line x1="444.8" y1="503.6" x2="444.8" y2="509.6" stroke="#f2eda1" stroke-width="2.2" stroke-linecap="butt"/>
<line x1="449.6" y1="503.2" x2="449.6" y2="509.2" stroke="#f2eda1" stroke-width="2.2" stroke-linecap="butt"/>
<line x1="464.8" y1="503.2" x2="464.8" y2="509.2" stroke="#f2eda1" stroke-width="2.2" stroke-linecap="butt"/>
<line x1="356.7" y1="296" x2="356.7" y2="323" stroke="#f2eda1" stroke-width="2.5" stroke-linecap="round"/>
<line x1="418.8" y1="296" x2="418.8" y2="323" stroke="#f2eda1" stroke-width="2.5" stroke-linecap="round"/>
<polygon points="350.2,327.6 359.6,332.8 350.2,338" fill="#f2eda1" stroke="#f2eda1" stroke-width="0.6" stroke-linejoin="round" stroke-linecap="round"/>
<polyline points="472.4,311.8 466,311.8 466,394.4 472.4,394.4" fill="none" stroke="#f2eda1" stroke-width="2.5" stroke-linejoin="round" stroke-linecap="round"/>
<polyline points="521.4,311.8 527.2,311.8 527.2,394.4 521.4,394.4" fill="none" stroke="#f2eda1" stroke-width="2.5" stroke-linejoin="round" stroke-linecap="round"/>
<line x1="342.3" y1="535.8" x2="402.3" y2="535.8" stroke="#f2eda1" stroke-width="2.5" stroke-linecap="round"/>
<line x1="342.3" y1="489.4" x2="403.8" y2="489.4" stroke="#f2eda1" stroke-width="2.5" stroke-linecap="round"/>
<text transform="translate(243.2,70.6)" font-size="29.08" fill="#f2eda1" stroke="#f2eda1" stroke-width="0.7" stroke-linejoin="round" textLength="33" lengthAdjust="spacingAndGlyphs"><tspan font-family="Liberation Sans">J</tspan>2</text>
<text transform="translate(595.7,70.6)" font-size="29.08" fill="#f2eda1" stroke="#f2eda1" stroke-width="0.7" stroke-linejoin="round" textLength="33.2" lengthAdjust="spacingAndGlyphs"><tspan font-family="Liberation Sans">J</tspan>3</text>
<text transform="translate(420.6,252)" font-size="29.63" fill="#f2eda1" stroke="#f2eda1" stroke-width="0.7" stroke-linejoin="round" textLength="31.6" lengthAdjust="spacingAndGlyphs"><tspan font-family="Liberation Sans">J</tspan>1</text>
<text transform="translate(474.8,265.5)" font-size="29.77" fill="#f2eda1" stroke="#f2eda1" stroke-width="0.7" stroke-linejoin="round" textLength="35.6" lengthAdjust="spacingAndGlyphs">R2</text>
<text transform="translate(469.2,300.6)" font-size="29.63" fill="#f2eda1" stroke="#f2eda1" stroke-width="0.7" stroke-linejoin="round" textLength="53.8" lengthAdjust="spacingAndGlyphs">SW1</text>
<text transform="translate(405.1,294.2)" font-size="29.36" fill="#f2eda1" stroke="#f2eda1" stroke-width="0.7" stroke-linejoin="round" textLength="35" lengthAdjust="spacingAndGlyphs">R1</text>
<text transform="translate(340.8,290.6)" font-size="29.22" fill="#f2eda1" stroke="#f2eda1" stroke-width="0.7" stroke-linejoin="round" textLength="55.4" lengthAdjust="spacingAndGlyphs">C13</text>
<text transform="translate(361,405.6)" font-size="29.77" fill="#f2eda1" stroke="#f2eda1" stroke-width="0.7" stroke-linejoin="round" textLength="56.1" lengthAdjust="spacingAndGlyphs">C14</text>
<text transform="translate(488.6,407.4)" font-size="29.9" fill="#f2eda1" stroke="#f2eda1" stroke-width="0.7" stroke-linejoin="round" textLength="35.8" lengthAdjust="spacingAndGlyphs">R6</text>
<text transform="translate(333.7,461.2)" font-size="29.77" fill="#f2eda1" stroke="#f2eda1" stroke-width="0.7" stroke-linejoin="round" textLength="36.5" lengthAdjust="spacingAndGlyphs">R7</text>
<text transform="translate(354.8,484.5)" font-size="29.63" fill="#f2eda1" stroke="#f2eda1" stroke-width="0.7" stroke-linejoin="round" textLength="38.8" lengthAdjust="spacingAndGlyphs">U4</text>
<text transform="translate(351,326.6) rotate(-90)" font-size="30.73" fill="#f2eda1" stroke="#f2eda1" stroke-width="0.7" stroke-linejoin="round" textLength="36" lengthAdjust="spacingAndGlyphs">U2</text>
<text transform="translate(322.3,507.2)" font-size="28.81" fill="#f2eda1" stroke="#f2eda1" stroke-width="0.7" stroke-linejoin="round" textLength="14.1" lengthAdjust="spacingAndGlyphs">1</text>
<text transform="translate(363.8,507.2)" font-size="28.81" fill="#f2eda1" stroke="#f2eda1" stroke-width="0.7" stroke-linejoin="round" textLength="53.6" lengthAdjust="spacingAndGlyphs">C12</text>
<text transform="translate(425,533.7) rotate(-90)" font-size="31.55" fill="#f2eda1" stroke="#f2eda1" stroke-width="0.7" stroke-linejoin="round" textLength="56.1" lengthAdjust="spacingAndGlyphs">C12</text>
<text transform="translate(463.4,490.2) rotate(-90)" font-size="30.73" fill="#f2eda1" stroke="#f2eda1" stroke-width="0.7" stroke-linejoin="round" textLength="18" lengthAdjust="spacingAndGlyphs">7</text>
<text transform="translate(444.6,522.8) rotate(-90)" font-size="30.18" fill="#f2eda1" stroke="#f2eda1" stroke-width="0.7" stroke-linejoin="round" textLength="35.4" lengthAdjust="spacingAndGlyphs">O</text>
<text transform="translate(532,561.2) rotate(-90)" font-size="30.18" fill="#f2eda1" stroke="#f2eda1" stroke-width="0.7" stroke-linejoin="round" textLength="33.6" lengthAdjust="spacingAndGlyphs">C2</text>
<g fill="rgba(216,100,255,0.42)">
<rect x="366.79" y="195.6" width="12.3" height="29.4" rx="0.3"/>
<rect x="493.71" y="195.6" width="12.3" height="29.4" rx="0.3"/>
<rect x="382.66" y="195.6" width="12.3" height="29.4" rx="0.3"/>
<rect x="477.84" y="195.6" width="12.3" height="29.4" rx="0.3"/>
<rect x="398.52" y="195.6" width="6.35" height="29.4" rx="0.3"/>
<rect x="467.93" y="195.6" width="6.35" height="29.4" rx="0.3"/>
<rect x="408.44" y="195.6" width="6.35" height="29.4" rx="0.3"/>
<rect x="458.01" y="195.6" width="6.35" height="29.4" rx="0.3"/>
<rect x="418.35" y="195.6" width="6.35" height="29.4" rx="0.3"/>
<rect x="448.1" y="195.6" width="6.35" height="29.4" rx="0.3"/>
<rect x="428.27" y="195.6" width="6.35" height="29.4" rx="0.3"/>
<rect x="438.18" y="195.6" width="6.35" height="29.4" rx="0.3"/>
<rect x="343.6" y="242.9" width="17.8" height="19.2" rx="4.5"/>
<rect x="375.6" y="242.9" width="18.1" height="19.2" rx="4.5"/>
<rect x="402.6" y="241" width="13.8" height="12.1" rx="3"/>
<rect x="402.6" y="260.6" width="13.8" height="11.8" rx="3"/>
<rect x="457.2" y="239.5" width="13.2" height="12.4" rx="3"/>
<rect x="457.2" y="259.2" width="13.2" height="11.8" rx="3"/>
<rect x="381.4" y="275.2" width="12.9" height="30.9" rx="3.5"/>
<rect x="362.6" y="313.6" width="12.8" height="28.8" rx="3.5"/>
<rect x="400.3" y="313.6" width="12.8" height="28.8" rx="3.5"/>
<rect x="363.8" y="357.4" width="17.4" height="19.6" rx="4.5"/>
<rect x="395.5" y="357.4" width="17.6" height="19.6" rx="4.5"/>
<rect x="476.6" y="303.3" width="39.8" height="16.6" rx="4.5"/>
<rect x="476.6" y="386.8" width="39.8" height="16.2" rx="4.5"/>
<rect x="490.1" y="413.8" width="11.8" height="13" rx="3"/>
<rect x="510.1" y="413.8" width="11.7" height="13" rx="3"/>
<rect x="336" y="468.3" width="11.6" height="12.1" rx="3"/>
<rect x="355.1" y="468.3" width="11.8" height="12.1" rx="3"/>
<rect x="374.4" y="468.3" width="11.5" height="12.1" rx="3"/>
<rect x="393.3" y="468.3" width="11.8" height="12.1" rx="3"/>
<rect x="335.9" y="494.8" width="18" height="6" rx="1.2"/>
<rect x="392.1" y="494.8" width="18.1" height="6" rx="1.2"/>
<rect x="335.9" y="504.8" width="18" height="6" rx="1.2"/>
<rect x="392.1" y="504.8" width="18.1" height="6" rx="1.2"/>
<rect x="335.9" y="514.9" width="18" height="6" rx="1.2"/>
<rect x="392.1" y="514.9" width="18.1" height="6" rx="1.2"/>
<rect x="335.9" y="524.9" width="18" height="6" rx="1.2"/>
<rect x="392.1" y="524.9" width="18.1" height="6" rx="1.2"/>
<rect x="370.4" y="498.1" width="4.5" height="30.8" rx="0.5"/>
<rect x="429.8" y="489.3" width="14.3" height="14.3" rx="3.5"/>
<rect x="429.8" y="509.6" width="14.3" height="12.1" rx="3.5"/>
<rect x="450.6" y="490.5" width="13.1" height="12.4" rx="3"/>
<rect x="450.6" y="509.6" width="13.1" height="12.1" rx="3"/>
<rect x="469.7" y="475.7" width="13.3" height="12.1" rx="3"/>
<rect x="469.7" y="494.6" width="13.3" height="11.3" rx="3"/>
</g>
<text transform="translate(496.5,310.2)" font-size="6.31" fill="#e6d3ea" text-anchor="middle">1</text>
<text transform="translate(496.5,317.6)" font-size="6.86" fill="#e6d3ea" textLength="13" lengthAdjust="spacingAndGlyphs" text-anchor="middle">GND</text>
<text transform="translate(496.5,393.4)" font-size="6.31" fill="#e6d3ea" text-anchor="middle" opacity="0.8">2</text>
<text transform="translate(496.5,400.4)" font-size="4.66" fill="#e6d3ea" textLength="33" lengthAdjust="spacingAndGlyphs" text-anchor="middle" opacity="0.8">Net-(R6-Pad2)</text>
<text transform="translate(351,255) rotate(-90)" font-size="5.76" fill="#e6d3ea" textLength="5" lengthAdjust="spacingAndGlyphs" opacity="0.75">2</text>
<text transform="translate(356.6,259.6) rotate(-90)" font-size="5.76" fill="#e6d3ea" textLength="11" lengthAdjust="spacingAndGlyphs" opacity="0.75">GND</text>
<text transform="translate(384,255) rotate(-90)" font-size="5.76" fill="#e6d3ea" textLength="5" lengthAdjust="spacingAndGlyphs" opacity="0.75">1</text>
<text transform="translate(389.8,260.6) rotate(-90)" font-size="5.76" fill="#e6d3ea" textLength="14" lengthAdjust="spacingAndGlyphs" opacity="0.75">VBUS</text>
<text transform="translate(371.2,370) rotate(-90)" font-size="5.76" fill="#e6d3ea" textLength="5" lengthAdjust="spacingAndGlyphs" opacity="0.75">2</text>
<text transform="translate(376.6,374.2) rotate(-90)" font-size="5.76" fill="#e6d3ea" textLength="11" lengthAdjust="spacingAndGlyphs" opacity="0.75">GND</text>
<text transform="translate(403.6,370) rotate(-90)" font-size="5.76" fill="#e6d3ea" textLength="5" lengthAdjust="spacingAndGlyphs" opacity="0.75">1</text>
<text transform="translate(409.2,374.6) rotate(-90)" font-size="5.76" fill="#e6d3ea" textLength="11" lengthAdjust="spacingAndGlyphs" opacity="0.75">3V3</text>
<text transform="translate(389.6,300.5) rotate(-90)" font-size="5.76" fill="#e6d3ea" textLength="15" lengthAdjust="spacingAndGlyphs" opacity="0.75">VBUS</text>
<text transform="translate(370.6,336) rotate(-90)" font-size="5.76" fill="#e6d3ea" textLength="12" lengthAdjust="spacingAndGlyphs" opacity="0.75">GND</text>
<text transform="translate(408.4,336) rotate(-90)" font-size="5.76" fill="#e6d3ea" textLength="12" lengthAdjust="spacingAndGlyphs" opacity="0.75">3V3</text>
<text transform="translate(375.2,222.5) rotate(-90)" font-size="5.76" fill="#e6d3ea" textLength="11" lengthAdjust="spacingAndGlyphs" opacity="0.75">GND</text>
<text transform="translate(370.2,221) rotate(-90)" font-size="4.94" fill="#e6d3ea" textLength="7" lengthAdjust="spacingAndGlyphs" opacity="0.75">A1</text>
<text transform="translate(391.4,222.5) rotate(-90)" font-size="5.76" fill="#e6d3ea" textLength="14" lengthAdjust="spacingAndGlyphs" opacity="0.75">VBUS</text>
<text transform="translate(386.4,221) rotate(-90)" font-size="4.94" fill="#e6d3ea" textLength="7" lengthAdjust="spacingAndGlyphs" opacity="0.75">A4</text>
<text transform="translate(488.2,222.5) rotate(-90)" font-size="5.76" fill="#e6d3ea" textLength="14" lengthAdjust="spacingAndGlyphs" opacity="0.75">VBUS</text>
<text transform="translate(483.2,221) rotate(-90)" font-size="4.94" fill="#e6d3ea" textLength="7" lengthAdjust="spacingAndGlyphs" opacity="0.75">B4</text>
<text transform="translate(504.4,222.5) rotate(-90)" font-size="5.76" fill="#e6d3ea" textLength="11" lengthAdjust="spacingAndGlyphs" opacity="0.75">GND</text>
<text transform="translate(499.4,221) rotate(-90)" font-size="4.94" fill="#e6d3ea" textLength="7" lengthAdjust="spacingAndGlyphs" opacity="0.75">B1</text>
<text transform="translate(473,219.5) rotate(-90)" font-size="5.21" fill="#e6d3ea" textLength="8" lengthAdjust="spacingAndGlyphs" opacity="0.7">B8</text>
<text transform="translate(463.1,219.5) rotate(-90)" font-size="5.21" fill="#e6d3ea" textLength="8" lengthAdjust="spacingAndGlyphs" opacity="0.7">A5</text>
<text transform="translate(453.2,219.5) rotate(-90)" font-size="5.21" fill="#e6d3ea" textLength="8" lengthAdjust="spacingAndGlyphs" opacity="0.7">B7</text>
<text transform="translate(403.6,219.5) rotate(-90)" font-size="5.21" fill="#e6d3ea" textLength="8" lengthAdjust="spacingAndGlyphs" opacity="0.7">A8</text>
<text transform="translate(413.5,219.5) rotate(-90)" font-size="5.21" fill="#e6d3ea" textLength="8" lengthAdjust="spacingAndGlyphs" opacity="0.7">B5</text>
<rect x="243" y="90.9" width="34" height="33.6" fill="#5c6cb4"/>
<circle cx="260" cy="107.7" r="10.3" fill="#001023" stroke="#d4ab3e" stroke-width="1.1"/>
<text transform="translate(260,103.5)" font-size="14.54" fill="#dfe2f2" text-anchor="middle">1</text>
<text transform="translate(260,120.7)" font-size="10.43" fill="#dfe2f2" textLength="27.5" lengthAdjust="spacingAndGlyphs" text-anchor="middle">GPIO0</text>
<circle cx="260" cy="158.1" r="17" fill="#5c6cb4"/>
<circle cx="260" cy="158.1" r="10.3" fill="#001023" stroke="#d4ab3e" stroke-width="1.1"/>
<text transform="translate(260,153.9)" font-size="14.54" fill="#dfe2f2" text-anchor="middle">2</text>
<text transform="translate(260,171.1)" font-size="10.43" fill="#dfe2f2" textLength="27.5" lengthAdjust="spacingAndGlyphs" text-anchor="middle">GPIO1</text>
<circle cx="260" cy="208.5" r="17" fill="#5c6cb4"/>
<circle cx="260" cy="208.5" r="10.3" fill="#001023" stroke="#d4ab3e" stroke-width="1.1"/>
<text transform="translate(260,204.3)" font-size="14.54" fill="#dfe2f2" text-anchor="middle">3</text>
<text transform="translate(260,221.5)" font-size="11.25" fill="#dfe2f2" textLength="19" lengthAdjust="spacingAndGlyphs" text-anchor="middle">GND</text>
<circle cx="260" cy="258.9" r="17" fill="#5c6cb4"/>
<circle cx="260" cy="258.9" r="10.3" fill="#001023" stroke="#d4ab3e" stroke-width="1.1"/>
<text transform="translate(260,254.7)" font-size="14.54" fill="#dfe2f2" text-anchor="middle">4</text>
<text transform="translate(260,271.9)" font-size="10.43" fill="#dfe2f2" textLength="27.5" lengthAdjust="spacingAndGlyphs" text-anchor="middle">GPIO2</text>
<circle cx="260" cy="309.3" r="17" fill="#5c6cb4"/>
<circle cx="260" cy="309.3" r="10.3" fill="#001023" stroke="#d4ab3e" stroke-width="1.1"/>
<text transform="translate(260,305.1)" font-size="14.54" fill="#dfe2f2" text-anchor="middle">5</text>
<text transform="translate(260,322.3)" font-size="10.43" fill="#dfe2f2" textLength="27.5" lengthAdjust="spacingAndGlyphs" text-anchor="middle">GPIO3</text>
<circle cx="260" cy="359.7" r="17" fill="#5c6cb4"/>
<circle cx="260" cy="359.7" r="10.3" fill="#001023" stroke="#d4ab3e" stroke-width="1.1"/>
<text transform="translate(260,355.5)" font-size="14.54" fill="#dfe2f2" text-anchor="middle">6</text>
<text transform="translate(260,372.7)" font-size="10.43" fill="#dfe2f2" textLength="27.5" lengthAdjust="spacingAndGlyphs" text-anchor="middle">GPIO4</text>
<circle cx="260" cy="410.1" r="17" fill="#5c6cb4"/>
<circle cx="260" cy="410.1" r="10.3" fill="#001023" stroke="#d4ab3e" stroke-width="1.1"/>
<text transform="translate(260,405.9)" font-size="14.54" fill="#dfe2f2" text-anchor="middle">7</text>
<text transform="translate(260,423.1)" font-size="10.43" fill="#dfe2f2" textLength="27.5" lengthAdjust="spacingAndGlyphs" text-anchor="middle">GPIO5</text>
<circle cx="260" cy="460.5" r="17" fill="#5c6cb4"/>
<circle cx="260" cy="460.5" r="10.3" fill="#001023" stroke="#d4ab3e" stroke-width="1.1"/>
<text transform="translate(260,456.3)" font-size="14.54" fill="#dfe2f2" text-anchor="middle">8</text>
<text transform="translate(260,473.5)" font-size="11.25" fill="#dfe2f2" textLength="19" lengthAdjust="spacingAndGlyphs" text-anchor="middle">GND</text>
<circle cx="260" cy="510.9" r="17" fill="#5c6cb4"/>
<circle cx="260" cy="510.9" r="10.3" fill="#001023" stroke="#d4ab3e" stroke-width="1.1"/>
<text transform="translate(260,506.7)" font-size="14.54" fill="#dfe2f2" text-anchor="middle">9</text>
<text transform="translate(260,523.9)" font-size="10.43" fill="#dfe2f2" textLength="27.5" lengthAdjust="spacingAndGlyphs" text-anchor="middle">GPIO6</text>
<rect x="595.5" y="90.9" width="34" height="33.6" fill="#5c6cb4"/>
<circle cx="612.5" cy="107.7" r="10.3" fill="#001023" stroke="#d4ab3e" stroke-width="1.1"/>
<text transform="translate(612.5,103.5)" font-size="14.54" fill="#dfe2f2" text-anchor="middle">1</text>
<text transform="translate(612.5,120.7)" font-size="11.25" fill="#dfe2f2" textLength="26" lengthAdjust="spacingAndGlyphs" text-anchor="middle">VBUS</text>
<circle cx="612.5" cy="158.1" r="17" fill="#5c6cb4"/>
<circle cx="612.5" cy="158.1" r="10.3" fill="#001023" stroke="#d4ab3e" stroke-width="1.1"/>
<text transform="translate(612.5,153.9)" font-size="14.54" fill="#dfe2f2" text-anchor="middle">2</text>
<text transform="translate(612.5,164.3)" font-size="4.66" fill="#c9cde4" textLength="29" lengthAdjust="spacingAndGlyphs" text-anchor="middle">GPIO29_ADC3</text>
<circle cx="612.5" cy="208.5" r="17" fill="#5c6cb4"/>
<circle cx="612.5" cy="208.5" r="10.3" fill="#001023" stroke="#d4ab3e" stroke-width="1.1"/>
<text transform="translate(612.5,204.3)" font-size="14.54" fill="#dfe2f2" text-anchor="middle">3</text>
<text transform="translate(612.5,221.5)" font-size="11.25" fill="#dfe2f2" textLength="19" lengthAdjust="spacingAndGlyphs" text-anchor="middle">GND</text>
<circle cx="612.5" cy="258.9" r="17" fill="#5c6cb4"/>
<circle cx="612.5" cy="258.9" r="10.3" fill="#001023" stroke="#d4ab3e" stroke-width="1.1"/>
<text transform="translate(612.5,254.7)" font-size="14.54" fill="#dfe2f2" text-anchor="middle">4</text>
<text transform="translate(612.5,265.1)" font-size="4.66" fill="#c9cde4" textLength="29" lengthAdjust="spacingAndGlyphs" text-anchor="middle">GPIO28_ADC2</text>
<circle cx="612.5" cy="309.3" r="17" fill="#5c6cb4"/>
<circle cx="612.5" cy="309.3" r="10.3" fill="#001023" stroke="#d4ab3e" stroke-width="1.1"/>
<text transform="translate(612.5,305.1)" font-size="14.54" fill="#dfe2f2" text-anchor="middle">5</text>
<text transform="translate(612.5,322.3)" font-size="11.25" fill="#dfe2f2" textLength="26" lengthAdjust="spacingAndGlyphs" text-anchor="middle">+3V3</text>
<circle cx="612.5" cy="359.7" r="17" fill="#5c6cb4"/>
<circle cx="612.5" cy="359.7" r="10.3" fill="#001023" stroke="#d4ab3e" stroke-width="1.1"/>
<text transform="translate(612.5,355.5)" font-size="14.54" fill="#dfe2f2" text-anchor="middle">6</text>
<text transform="translate(612.5,365.9)" font-size="4.66" fill="#c9cde4" textLength="29" lengthAdjust="spacingAndGlyphs" text-anchor="middle">GPIO27_ADC1</text>
<circle cx="612.5" cy="410.1" r="17" fill="#5c6cb4"/>
<circle cx="612.5" cy="410.1" r="10.3" fill="#001023" stroke="#d4ab3e" stroke-width="1.1"/>
<text transform="translate(612.5,405.9)" font-size="14.54" fill="#dfe2f2" text-anchor="middle">7</text>
<text transform="translate(612.5,416.3)" font-size="4.66" fill="#c9cde4" textLength="29" lengthAdjust="spacingAndGlyphs" text-anchor="middle">GPIO26_ADC0</text>
<circle cx="612.5" cy="460.5" r="17" fill="#5c6cb4"/>
<circle cx="612.5" cy="460.5" r="10.3" fill="#001023" stroke="#d4ab3e" stroke-width="1.1"/>
<text transform="translate(612.5,456.3)" font-size="14.54" fill="#dfe2f2" text-anchor="middle">8</text>
<text transform="translate(612.5,473.5)" font-size="11.25" fill="#dfe2f2" textLength="19" lengthAdjust="spacingAndGlyphs" text-anchor="middle">GND</text>
<circle cx="612.5" cy="510.9" r="17" fill="#5c6cb4"/>
<circle cx="612.5" cy="510.9" r="10.3" fill="#001023" stroke="#d4ab3e" stroke-width="1.1"/>
<text transform="translate(612.5,506.7)" font-size="14.54" fill="#dfe2f2" text-anchor="middle">9</text>
<text transform="translate(612.5,523.9)" font-size="10.43" fill="#dfe2f2" textLength="27.5" lengthAdjust="spacingAndGlyphs" text-anchor="middle">GPIO24</text>
<rect x="341.2" y="93" width="19.6" height="32" rx="9.8" fill="#5c6cb4"/>
<rect x="344.1" y="96" width="13.8" height="26" rx="6.9" fill="#001023" stroke="#d4ab3e" stroke-width="1.0"/>
<text transform="translate(349.8,115.5) rotate(-90)" font-size="8.5" fill="#cfd3ea" textLength="11" lengthAdjust="spacingAndGlyphs">S1</text>
<text transform="translate(358,118) rotate(-90)" font-size="7.68" fill="#cfd3ea" textLength="17" lengthAdjust="spacingAndGlyphs">GND</text>
<rect x="341.2" y="171.9" width="19.6" height="40.7" rx="9.8" fill="#5c6cb4"/>
<rect x="344.1" y="174.9" width="13.8" height="34.7" rx="6.9" fill="#001023" stroke="#d4ab3e" stroke-width="1.0"/>
<text transform="translate(349.8,198.75) rotate(-90)" font-size="8.5" fill="#cfd3ea" textLength="11" lengthAdjust="spacingAndGlyphs">S1</text>
<text transform="translate(358,201.25) rotate(-90)" font-size="7.68" fill="#cfd3ea" textLength="17" lengthAdjust="spacingAndGlyphs">GND</text>
<rect x="512.1" y="93" width="19.6" height="32" rx="9.8" fill="#5c6cb4"/>
<rect x="515" y="96" width="13.8" height="26" rx="6.9" fill="#001023" stroke="#d4ab3e" stroke-width="1.0"/>
<text transform="translate(520.7,115.5) rotate(-90)" font-size="8.5" fill="#cfd3ea" textLength="11" lengthAdjust="spacingAndGlyphs">S1</text>
<text transform="translate(528.9,118) rotate(-90)" font-size="7.68" fill="#cfd3ea" textLength="17" lengthAdjust="spacingAndGlyphs">GND</text>
<rect x="512.1" y="171.9" width="19.6" height="40.7" rx="9.8" fill="#5c6cb4"/>
<rect x="515" y="174.9" width="13.8" height="34.7" rx="6.9" fill="#001023" stroke="#d4ab3e" stroke-width="1.0"/>
<text transform="translate(520.7,198.75) rotate(-90)" font-size="8.5" fill="#cfd3ea" textLength="11" lengthAdjust="spacingAndGlyphs">S1</text>
<text transform="translate(528.9,201.25) rotate(-90)" font-size="7.68" fill="#cfd3ea" textLength="17" lengthAdjust="spacingAndGlyphs">GND</text>
<circle cx="378.9" cy="181.6" r="6.5" fill="#1fc6d4"/>
<circle cx="493.7" cy="181.6" r="6.5" fill="#1fc6d4"/>
<polyline points="228.6,600 228.6,80.4 644.6,80.4 644.6,600" fill="none" stroke="#a9adb0" stroke-width="1.1" stroke-linejoin="round" stroke-linecap="round"/>
<line x1="434.4" y1="130.2" x2="437.6" y2="130.2" stroke="#a21eb0" stroke-width="0.7" stroke-linecap="round"/>
<line x1="436" y1="128.6" x2="436" y2="131.8" stroke="#a21eb0" stroke-width="0.7" stroke-linecap="round"/>
<circle cx="502.3" cy="230.8" r="3.4" fill="#e6b432"/>
<circle cx="504" cy="131.1" r="3.4" fill="#e6b432"/>
<circle cx="557.6" cy="109.8" r="3.4" fill="#e6b432"/>
<circle cx="294.2" cy="319.3" r="3.4" fill="#e6b432"/>
<circle cx="298.2" cy="357.5" r="3.4" fill="#e6b432"/>
<circle cx="347.8" cy="319.3" r="3.4" fill="#e6b432"/>
<circle cx="347.8" cy="337" r="3.4" fill="#e6b432"/>
<circle cx="425.6" cy="313.2" r="3.4" fill="#e6b432"/>
<circle cx="425.6" cy="331" r="3.4" fill="#e6b432"/>
<circle cx="347.6" cy="357.3" r="3.4" fill="#e6b432"/>
<circle cx="425.6" cy="351.2" r="3.4" fill="#e6b432"/>
<circle cx="385.6" cy="412.8" r="3.4" fill="#e6b432"/>
<circle cx="485.2" cy="412.6" r="3.4" fill="#e6b432"/>
<circle cx="349.5" cy="449.9" r="3.4" fill="#e6b432"/>
<circle cx="383.1" cy="463.9" r="3.4" fill="#e6b432"/>
<circle cx="441.3" cy="467.8" r="3.4" fill="#e6b432"/>
<circle cx="420.7" cy="498.8" r="3.4" fill="#e6b432"/>
<circle cx="458.2" cy="484.4" r="3.4" fill="#e6b432"/>
<circle cx="480.9" cy="465.7" r="3.4" fill="#e6b432"/>
<circle cx="521.7" cy="499" r="3.4" fill="#e6b432"/>
<circle cx="505.7" cy="522.8" r="3.4" fill="#e6b432"/>
<circle cx="534.5" cy="536.6" r="3.4" fill="#e6b432"/>
<circle cx="448.2" cy="530" r="3.4" fill="#e6b432"/>
<circle cx="476" cy="538.2" r="3.4" fill="#e6b432"/>
<circle cx="361" cy="531.8" r="3.4" fill="#e6b432"/>
</g>
</svg>
</div>
</body></html>
